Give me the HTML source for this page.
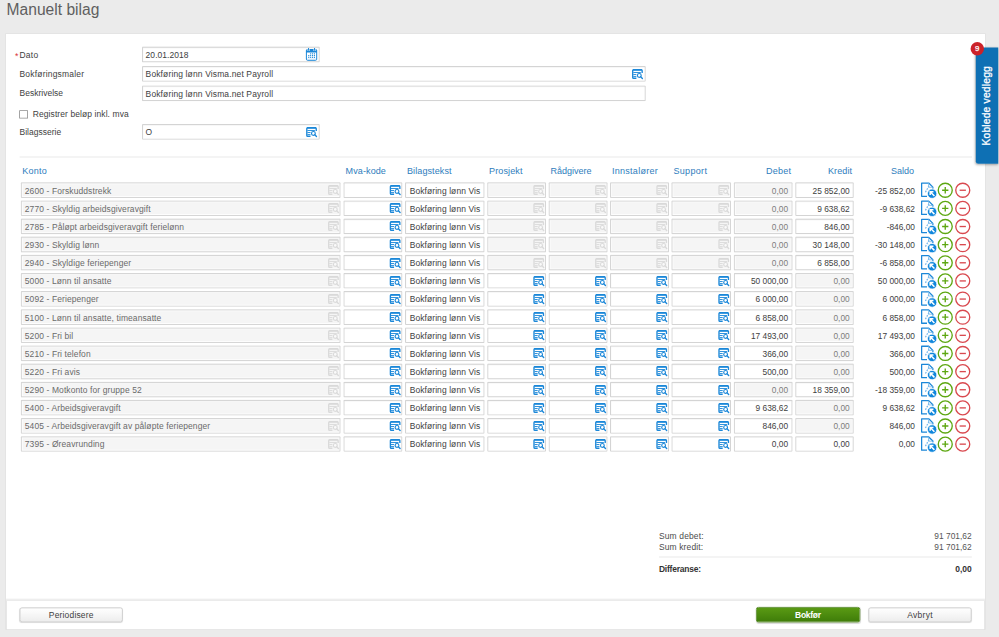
<!DOCTYPE html>
<html lang="no"><head><meta charset="utf-8"><title>Manuelt bilag</title>
<style>
html,body{margin:0;padding:0;background:#ebebeb;overflow:hidden}
body{width:999px;height:637px;position:relative;font-family:"Liberation Sans",sans-serif}
#s{position:absolute;left:0;top:0;width:4995px;height:3185px;transform:scale(0.2);transform-origin:0 0;background:#ebebeb;overflow:hidden}
#s>*{position:absolute;box-sizing:border-box}
#tx{position:absolute;left:0;top:0;font-family:"Liberation Sans",sans-serif}
#tx text{white-space:pre}
.panel{background:#fff;box-shadow:0 0 0 4px rgba(0,0,0,.035)}
.in{background:#fff;border-radius:5px;box-shadow:inset 0 0 0 5.4px #d4d4d4,inset 0 9.5px 4px rgba(0,0,0,.035)}
.dis{background:#f5f5f5;box-shadow:inset 0 0 0 5.4px #d6d6d6,inset 0 9.5px 4px rgba(0,0,0,.03),inset 0 0 0 10px rgba(255,255,255,.75)}
.cb{background:#fff;border:4.5px solid #8e8e8e;border-radius:2px}
.hr{background:#e3e3e3}
.foot{background:#fff;border:4px solid #e2e2e2;border-top:none}
.fsh{background:linear-gradient(rgba(0,0,0,0),rgba(0,0,0,.035) 45%,rgba(0,0,0,.14))}
.btn{border:4.25px solid #c4c4c4;border-radius:12px;background:linear-gradient(#ffffff,#ededed);box-shadow:0 4px 4px rgba(0,0,0,.15)}
.btn.g{border-color:#3f7a0a;background:linear-gradient(#5a9a14,#3f7d09)}
.tab{background:#0e70b4;border-radius:0 0 0 12px;box-shadow:-4px 4px 12px rgba(0,0,0,.3)}
.badge{background:#cc2229;border-radius:50%}
</style></head>
<body><div id="s">
<div class="panel" style="left:30px;top:170px;width:4895px;height:2975px;"></div>
<div class="in" style="left:710px;top:232.75px;width:889px;height:79.25px;"></div>
<div class="in" style="left:710px;top:329.75px;width:2519px;height:79.25px;"></div>
<div class="in" style="left:710px;top:426.5px;width:2519px;height:79.25px;"></div>
<div class="in" style="left:710px;top:620px;width:889px;height:79.25px;"></div>
<div class="cb" style="left:95.5px;top:550.5px;width:44px;height:42px;"></div>
<div class="hr" style="left:97.5px;top:782.5px;width:4762.5px;height:4.5px;"></div>
<div class="in dis" style="left:103.5px;top:911.25px;width:1599.5px;height:78.5px;"></div>
<div class="in" style="left:1717px;top:911.25px;width:294.5px;height:78.5px;"></div>
<div class="in" style="left:2025px;top:911.25px;width:398px;height:78.5px;"></div>
<div class="in dis" style="left:2435.5px;top:911.25px;width:294px;height:78.5px;"></div>
<div class="in dis" style="left:2742.75px;top:911.25px;width:295.5px;height:78.5px;"></div>
<div class="in dis" style="left:3050.25px;top:911.25px;width:294.25px;height:78.5px;"></div>
<div class="in dis" style="left:3357px;top:911.25px;width:297.5px;height:78.5px;"></div>
<div class="in dis" style="left:3668.75px;top:911.25px;width:293.75px;height:78.5px;"></div>
<div class="in" style="left:3976.25px;top:911.25px;width:292.5px;height:78.5px;"></div>
<div class="in dis" style="left:103.5px;top:1001.93px;width:1599.5px;height:78.5px;"></div>
<div class="in" style="left:1717px;top:1001.93px;width:294.5px;height:78.5px;"></div>
<div class="in" style="left:2025px;top:1001.93px;width:398px;height:78.5px;"></div>
<div class="in dis" style="left:2435.5px;top:1001.93px;width:294px;height:78.5px;"></div>
<div class="in dis" style="left:2742.75px;top:1001.93px;width:295.5px;height:78.5px;"></div>
<div class="in dis" style="left:3050.25px;top:1001.93px;width:294.25px;height:78.5px;"></div>
<div class="in dis" style="left:3357px;top:1001.93px;width:297.5px;height:78.5px;"></div>
<div class="in dis" style="left:3668.75px;top:1001.93px;width:293.75px;height:78.5px;"></div>
<div class="in" style="left:3976.25px;top:1001.93px;width:292.5px;height:78.5px;"></div>
<div class="in dis" style="left:103.5px;top:1092.61px;width:1599.5px;height:78.5px;"></div>
<div class="in" style="left:1717px;top:1092.61px;width:294.5px;height:78.5px;"></div>
<div class="in" style="left:2025px;top:1092.61px;width:398px;height:78.5px;"></div>
<div class="in dis" style="left:2435.5px;top:1092.61px;width:294px;height:78.5px;"></div>
<div class="in dis" style="left:2742.75px;top:1092.61px;width:295.5px;height:78.5px;"></div>
<div class="in dis" style="left:3050.25px;top:1092.61px;width:294.25px;height:78.5px;"></div>
<div class="in dis" style="left:3357px;top:1092.61px;width:297.5px;height:78.5px;"></div>
<div class="in dis" style="left:3668.75px;top:1092.61px;width:293.75px;height:78.5px;"></div>
<div class="in" style="left:3976.25px;top:1092.61px;width:292.5px;height:78.5px;"></div>
<div class="in dis" style="left:103.5px;top:1183.29px;width:1599.5px;height:78.5px;"></div>
<div class="in" style="left:1717px;top:1183.29px;width:294.5px;height:78.5px;"></div>
<div class="in" style="left:2025px;top:1183.29px;width:398px;height:78.5px;"></div>
<div class="in dis" style="left:2435.5px;top:1183.29px;width:294px;height:78.5px;"></div>
<div class="in dis" style="left:2742.75px;top:1183.29px;width:295.5px;height:78.5px;"></div>
<div class="in dis" style="left:3050.25px;top:1183.29px;width:294.25px;height:78.5px;"></div>
<div class="in dis" style="left:3357px;top:1183.29px;width:297.5px;height:78.5px;"></div>
<div class="in dis" style="left:3668.75px;top:1183.29px;width:293.75px;height:78.5px;"></div>
<div class="in" style="left:3976.25px;top:1183.29px;width:292.5px;height:78.5px;"></div>
<div class="in dis" style="left:103.5px;top:1273.97px;width:1599.5px;height:78.5px;"></div>
<div class="in" style="left:1717px;top:1273.97px;width:294.5px;height:78.5px;"></div>
<div class="in" style="left:2025px;top:1273.97px;width:398px;height:78.5px;"></div>
<div class="in dis" style="left:2435.5px;top:1273.97px;width:294px;height:78.5px;"></div>
<div class="in dis" style="left:2742.75px;top:1273.97px;width:295.5px;height:78.5px;"></div>
<div class="in dis" style="left:3050.25px;top:1273.97px;width:294.25px;height:78.5px;"></div>
<div class="in dis" style="left:3357px;top:1273.97px;width:297.5px;height:78.5px;"></div>
<div class="in dis" style="left:3668.75px;top:1273.97px;width:293.75px;height:78.5px;"></div>
<div class="in" style="left:3976.25px;top:1273.97px;width:292.5px;height:78.5px;"></div>
<div class="in dis" style="left:103.5px;top:1364.65px;width:1599.5px;height:78.5px;"></div>
<div class="in" style="left:1717px;top:1364.65px;width:294.5px;height:78.5px;"></div>
<div class="in" style="left:2025px;top:1364.65px;width:398px;height:78.5px;"></div>
<div class="in" style="left:2435.5px;top:1364.65px;width:294px;height:78.5px;"></div>
<div class="in" style="left:2742.75px;top:1364.65px;width:295.5px;height:78.5px;"></div>
<div class="in" style="left:3050.25px;top:1364.65px;width:294.25px;height:78.5px;"></div>
<div class="in" style="left:3357px;top:1364.65px;width:297.5px;height:78.5px;"></div>
<div class="in" style="left:3668.75px;top:1364.65px;width:293.75px;height:78.5px;"></div>
<div class="in dis" style="left:3976.25px;top:1364.65px;width:292.5px;height:78.5px;"></div>
<div class="in dis" style="left:103.5px;top:1455.33px;width:1599.5px;height:78.5px;"></div>
<div class="in" style="left:1717px;top:1455.33px;width:294.5px;height:78.5px;"></div>
<div class="in" style="left:2025px;top:1455.33px;width:398px;height:78.5px;"></div>
<div class="in" style="left:2435.5px;top:1455.33px;width:294px;height:78.5px;"></div>
<div class="in" style="left:2742.75px;top:1455.33px;width:295.5px;height:78.5px;"></div>
<div class="in" style="left:3050.25px;top:1455.33px;width:294.25px;height:78.5px;"></div>
<div class="in" style="left:3357px;top:1455.33px;width:297.5px;height:78.5px;"></div>
<div class="in" style="left:3668.75px;top:1455.33px;width:293.75px;height:78.5px;"></div>
<div class="in dis" style="left:3976.25px;top:1455.33px;width:292.5px;height:78.5px;"></div>
<div class="in dis" style="left:103.5px;top:1546.01px;width:1599.5px;height:78.5px;"></div>
<div class="in" style="left:1717px;top:1546.01px;width:294.5px;height:78.5px;"></div>
<div class="in" style="left:2025px;top:1546.01px;width:398px;height:78.5px;"></div>
<div class="in" style="left:2435.5px;top:1546.01px;width:294px;height:78.5px;"></div>
<div class="in" style="left:2742.75px;top:1546.01px;width:295.5px;height:78.5px;"></div>
<div class="in" style="left:3050.25px;top:1546.01px;width:294.25px;height:78.5px;"></div>
<div class="in" style="left:3357px;top:1546.01px;width:297.5px;height:78.5px;"></div>
<div class="in" style="left:3668.75px;top:1546.01px;width:293.75px;height:78.5px;"></div>
<div class="in dis" style="left:3976.25px;top:1546.01px;width:292.5px;height:78.5px;"></div>
<div class="in dis" style="left:103.5px;top:1636.69px;width:1599.5px;height:78.5px;"></div>
<div class="in" style="left:1717px;top:1636.69px;width:294.5px;height:78.5px;"></div>
<div class="in" style="left:2025px;top:1636.69px;width:398px;height:78.5px;"></div>
<div class="in" style="left:2435.5px;top:1636.69px;width:294px;height:78.5px;"></div>
<div class="in" style="left:2742.75px;top:1636.69px;width:295.5px;height:78.5px;"></div>
<div class="in" style="left:3050.25px;top:1636.69px;width:294.25px;height:78.5px;"></div>
<div class="in" style="left:3357px;top:1636.69px;width:297.5px;height:78.5px;"></div>
<div class="in" style="left:3668.75px;top:1636.69px;width:293.75px;height:78.5px;"></div>
<div class="in dis" style="left:3976.25px;top:1636.69px;width:292.5px;height:78.5px;"></div>
<div class="in dis" style="left:103.5px;top:1727.37px;width:1599.5px;height:78.5px;"></div>
<div class="in" style="left:1717px;top:1727.37px;width:294.5px;height:78.5px;"></div>
<div class="in" style="left:2025px;top:1727.37px;width:398px;height:78.5px;"></div>
<div class="in" style="left:2435.5px;top:1727.37px;width:294px;height:78.5px;"></div>
<div class="in" style="left:2742.75px;top:1727.37px;width:295.5px;height:78.5px;"></div>
<div class="in" style="left:3050.25px;top:1727.37px;width:294.25px;height:78.5px;"></div>
<div class="in" style="left:3357px;top:1727.37px;width:297.5px;height:78.5px;"></div>
<div class="in" style="left:3668.75px;top:1727.37px;width:293.75px;height:78.5px;"></div>
<div class="in dis" style="left:3976.25px;top:1727.37px;width:292.5px;height:78.5px;"></div>
<div class="in dis" style="left:103.5px;top:1818.05px;width:1599.5px;height:78.5px;"></div>
<div class="in" style="left:1717px;top:1818.05px;width:294.5px;height:78.5px;"></div>
<div class="in" style="left:2025px;top:1818.05px;width:398px;height:78.5px;"></div>
<div class="in" style="left:2435.5px;top:1818.05px;width:294px;height:78.5px;"></div>
<div class="in" style="left:2742.75px;top:1818.05px;width:295.5px;height:78.5px;"></div>
<div class="in" style="left:3050.25px;top:1818.05px;width:294.25px;height:78.5px;"></div>
<div class="in" style="left:3357px;top:1818.05px;width:297.5px;height:78.5px;"></div>
<div class="in" style="left:3668.75px;top:1818.05px;width:293.75px;height:78.5px;"></div>
<div class="in dis" style="left:3976.25px;top:1818.05px;width:292.5px;height:78.5px;"></div>
<div class="in dis" style="left:103.5px;top:1908.73px;width:1599.5px;height:78.5px;"></div>
<div class="in" style="left:1717px;top:1908.73px;width:294.5px;height:78.5px;"></div>
<div class="in" style="left:2025px;top:1908.73px;width:398px;height:78.5px;"></div>
<div class="in" style="left:2435.5px;top:1908.73px;width:294px;height:78.5px;"></div>
<div class="in" style="left:2742.75px;top:1908.73px;width:295.5px;height:78.5px;"></div>
<div class="in" style="left:3050.25px;top:1908.73px;width:294.25px;height:78.5px;"></div>
<div class="in" style="left:3357px;top:1908.73px;width:297.5px;height:78.5px;"></div>
<div class="in dis" style="left:3668.75px;top:1908.73px;width:293.75px;height:78.5px;"></div>
<div class="in" style="left:3976.25px;top:1908.73px;width:292.5px;height:78.5px;"></div>
<div class="in dis" style="left:103.5px;top:1999.41px;width:1599.5px;height:78.5px;"></div>
<div class="in" style="left:1717px;top:1999.41px;width:294.5px;height:78.5px;"></div>
<div class="in" style="left:2025px;top:1999.41px;width:398px;height:78.5px;"></div>
<div class="in" style="left:2435.5px;top:1999.41px;width:294px;height:78.5px;"></div>
<div class="in" style="left:2742.75px;top:1999.41px;width:295.5px;height:78.5px;"></div>
<div class="in" style="left:3050.25px;top:1999.41px;width:294.25px;height:78.5px;"></div>
<div class="in" style="left:3357px;top:1999.41px;width:297.5px;height:78.5px;"></div>
<div class="in" style="left:3668.75px;top:1999.41px;width:293.75px;height:78.5px;"></div>
<div class="in dis" style="left:3976.25px;top:1999.41px;width:292.5px;height:78.5px;"></div>
<div class="in dis" style="left:103.5px;top:2090.09px;width:1599.5px;height:78.5px;"></div>
<div class="in" style="left:1717px;top:2090.09px;width:294.5px;height:78.5px;"></div>
<div class="in" style="left:2025px;top:2090.09px;width:398px;height:78.5px;"></div>
<div class="in" style="left:2435.5px;top:2090.09px;width:294px;height:78.5px;"></div>
<div class="in" style="left:2742.75px;top:2090.09px;width:295.5px;height:78.5px;"></div>
<div class="in" style="left:3050.25px;top:2090.09px;width:294.25px;height:78.5px;"></div>
<div class="in" style="left:3357px;top:2090.09px;width:297.5px;height:78.5px;"></div>
<div class="in" style="left:3668.75px;top:2090.09px;width:293.75px;height:78.5px;"></div>
<div class="in dis" style="left:3976.25px;top:2090.09px;width:292.5px;height:78.5px;"></div>
<div class="in dis" style="left:103.5px;top:2180.77px;width:1599.5px;height:78.5px;"></div>
<div class="in" style="left:1717px;top:2180.77px;width:294.5px;height:78.5px;"></div>
<div class="in" style="left:2025px;top:2180.77px;width:398px;height:78.5px;"></div>
<div class="in" style="left:2435.5px;top:2180.77px;width:294px;height:78.5px;"></div>
<div class="in" style="left:2742.75px;top:2180.77px;width:295.5px;height:78.5px;"></div>
<div class="in" style="left:3050.25px;top:2180.77px;width:294.25px;height:78.5px;"></div>
<div class="in" style="left:3357px;top:2180.77px;width:297.5px;height:78.5px;"></div>
<div class="in" style="left:3668.75px;top:2180.77px;width:293.75px;height:78.5px;"></div>
<div class="in" style="left:3976.25px;top:2180.77px;width:292.5px;height:78.5px;"></div>
<div class="hr" style="left:3294.5px;top:2782.5px;width:1564px;height:4.5px;"></div>
<div class="fsh" style="left:30px;top:2987px;width:4895px;height:17px;"></div>
<div class="foot" style="left:30px;top:3004px;width:4895px;height:146px;"></div>
<div class="btn" style="left:97.5px;top:3036.5px;width:516.5px;height:74.5px;"></div>
<div class="btn g" style="left:3780px;top:3035px;width:521px;height:76.5px;"></div>
<div class="btn" style="left:4341.5px;top:3036.5px;width:516.5px;height:74.5px;"></div>
<div class="tab" style="left:4878.5px;top:238px;width:112.5px;height:580.5px;"></div>
<div class="badge" style="left:4853px;top:209.5px;width:67px;height:67px;"></div>
</div>
<svg id="tx" width="999" height="637" viewBox="0 0 999 637">
<text x="6.6" y="15.2" font-size="15.6" fill="#5f5f5f">Manuelt bilag</text>
<text x="15" y="59" font-size="8.8" fill="#d9333a">*</text>
<text x="19.5" y="57.7" font-size="8.48" fill="#3e3e3e" textLength="18.6">Dato</text>
<text x="19.5" y="77" font-size="8.48" fill="#3e3e3e" textLength="64.5">Bokføringsmaler</text>
<text x="19.5" y="96.4" font-size="8.48" fill="#3e3e3e" textLength="43.5">Beskrivelse</text>
<text x="19.5" y="135" font-size="8.48" fill="#3e3e3e" textLength="41.6">Bilagsserie</text>
<text x="145.6" y="57.8" font-size="8.48" fill="#3e3e3e" textLength="42.9">20.01.2018</text>
<text x="145.6" y="77.2" font-size="8.48" fill="#3e3e3e" textLength="127.5">Bokføring lønn Visma.net Payroll</text>
<text x="145.6" y="96.6" font-size="8.48" fill="#3e3e3e" textLength="127.5">Bokføring lønn Visma.net Payroll</text>
<text x="145.6" y="135.2" font-size="8.48" fill="#3e3e3e">O</text>
<g transform="translate(305.9 47.9)"><rect x=".5" y="1.6" width="10.3" height="10.8" rx="1.1" fill="#fff" stroke="#1b87d8" stroke-width="1"/><path d="M.3 4.5V2.8Q.3 1.3 1.8 1.3H9.5Q11 1.3 11 2.8V4.5Z" fill="#1b87d8"/><path d="M2.65 1V3.1M8.65 1V3.1" stroke="#fff" stroke-width="2"/><path d="M2.65 .5V2.5M8.65 .5V2.5" stroke="#1b87d8" stroke-width="1" stroke-linecap="round"/><path d="M1 11.2H10.3" stroke="#a9d2f1" stroke-width=".6"/><g fill="#1b87d8"><rect x="4.2" y="5.4" width="1.1" height="1.1"/><rect x="6.1" y="5.4" width="1.1" height="1.1"/><rect x="8" y="5.4" width="1.1" height="1.1"/><rect x="2.3" y="7.15" width="1.1" height="1.1"/><rect x="4.2" y="7.15" width="1.1" height="1.1"/><rect x="6.1" y="7.15" width="1.1" height="1.1"/><rect x="8" y="7.15" width="1.1" height="1.1"/><rect x="2.3" y="8.9" width="1.1" height="1.1"/><rect x="4.2" y="8.9" width="1.1" height="1.1"/><rect x="6.1" y="8.9" width="1.1" height="1.1"/><rect x="8" y="8.9" width="1.1" height="1.1"/></g></g>
<g transform="translate(632 69)"><g fill="none" stroke="#1b87d8" stroke-linejoin="round"><path d="M10.15 4V1.6Q10.15 .7 9.25 .7H1.6Q.7 .7 .7 1.6V8.4Q.7 9.25 1.6 9.25H4.4" stroke-width="1.35"/><path d="M1 .85H9.9" stroke-width="1.6"/><path d="M1.3 3.5H8.8M1.3 5.5H4.4M1.3 7.45H4.4" stroke-width=".9"/><circle cx="7.3" cy="6.4" r="1.9" stroke-width="1.15" fill="#fff"/><path d="M8.7 7.8L10.4 9.5" stroke-width="1.35" stroke-linecap="round"/></g></g>
<g transform="translate(306.1 127)"><g fill="none" stroke="#1b87d8" stroke-linejoin="round"><path d="M10.15 4V1.6Q10.15 .7 9.25 .7H1.6Q.7 .7 .7 1.6V8.4Q.7 9.25 1.6 9.25H4.4" stroke-width="1.35"/><path d="M1 .85H9.9" stroke-width="1.6"/><path d="M1.3 3.5H8.8M1.3 5.5H4.4M1.3 7.45H4.4" stroke-width=".9"/><circle cx="7.3" cy="6.4" r="1.9" stroke-width="1.15" fill="#fff"/><path d="M8.7 7.8L10.4 9.5" stroke-width="1.35" stroke-linecap="round"/></g></g>
<text x="32.8" y="117.1" font-size="8.48" fill="#3e3e3e" textLength="95.9">Registrer beløp inkl. mva</text>
<text x="22.2" y="174.2" font-size="9.04" fill="#2e7dbd" textLength="24.7">Konto</text>
<text x="345.6" y="174.2" font-size="9.04" fill="#2e7dbd" textLength="40.3">Mva-kode</text>
<text x="406.9" y="174.2" font-size="9.04" fill="#2e7dbd" textLength="44.7">Bilagstekst</text>
<text x="489" y="174.2" font-size="9.04" fill="#2e7dbd" textLength="33.5">Prosjekt</text>
<text x="550.6" y="174.2" font-size="9.04" fill="#2e7dbd" textLength="41">Rådgivere</text>
<text x="611.9" y="174.2" font-size="9.04" fill="#2e7dbd" textLength="45.9">Innstalører</text>
<text x="673.4" y="174.2" font-size="9.04" fill="#2e7dbd" textLength="33.5">Support</text>
<text x="766" y="174.2" font-size="9.04" fill="#2e7dbd" textLength="24.9">Debet</text>
<text x="827.9" y="174.2" font-size="9.04" fill="#2e7dbd" textLength="24.2">Kredit</text>
<text x="891.1" y="174.2" font-size="9.04" fill="#2e7dbd" textLength="22.9">Saldo</text>
<text x="24.8" y="193.55" font-size="8.48" fill="#6a6a6a" textLength="86.4">2600 - Forskuddstrekk</text>
<g transform="translate(328 185)"><g fill="none" stroke="#dadada" stroke-linejoin="round"><path d="M10.15 4V1.6Q10.15 .7 9.25 .7H1.6Q.7 .7 .7 1.6V8.4Q.7 9.25 1.6 9.25H4.4" stroke-width="1.35"/><path d="M1 .85H9.9" stroke-width="1.6"/><path d="M1.3 3.5H8.8M1.3 5.5H4.4M1.3 7.45H4.4" stroke-width=".9"/><circle cx="7.3" cy="6.4" r="1.9" stroke-width="1.15" fill="#fafafa"/><path d="M8.7 7.8L10.4 9.5" stroke-width="1.35" stroke-linecap="round"/></g></g>
<g transform="translate(389.7 185)"><g fill="none" stroke="#1b87d8" stroke-linejoin="round"><path d="M10.15 4V1.6Q10.15 .7 9.25 .7H1.6Q.7 .7 .7 1.6V8.4Q.7 9.25 1.6 9.25H4.4" stroke-width="1.35"/><path d="M1 .85H9.9" stroke-width="1.6"/><path d="M1.3 3.5H8.8M1.3 5.5H4.4M1.3 7.45H4.4" stroke-width=".9"/><circle cx="7.3" cy="6.4" r="1.9" stroke-width="1.15" fill="#fff"/><path d="M8.7 7.8L10.4 9.5" stroke-width="1.35" stroke-linecap="round"/></g></g>
<text x="409.7" y="193.55" font-size="8.48" fill="#3e3e3e" textLength="70.5">Bokføring lønn Vis</text>
<g transform="translate(533.3 185)"><g fill="none" stroke="#dadada" stroke-linejoin="round"><path d="M10.15 4V1.6Q10.15 .7 9.25 .7H1.6Q.7 .7 .7 1.6V8.4Q.7 9.25 1.6 9.25H4.4" stroke-width="1.35"/><path d="M1 .85H9.9" stroke-width="1.6"/><path d="M1.3 3.5H8.8M1.3 5.5H4.4M1.3 7.45H4.4" stroke-width=".9"/><circle cx="7.3" cy="6.4" r="1.9" stroke-width="1.15" fill="#fafafa"/><path d="M8.7 7.8L10.4 9.5" stroke-width="1.35" stroke-linecap="round"/></g></g>
<g transform="translate(595.05 185)"><g fill="none" stroke="#dadada" stroke-linejoin="round"><path d="M10.15 4V1.6Q10.15 .7 9.25 .7H1.6Q.7 .7 .7 1.6V8.4Q.7 9.25 1.6 9.25H4.4" stroke-width="1.35"/><path d="M1 .85H9.9" stroke-width="1.6"/><path d="M1.3 3.5H8.8M1.3 5.5H4.4M1.3 7.45H4.4" stroke-width=".9"/><circle cx="7.3" cy="6.4" r="1.9" stroke-width="1.15" fill="#fafafa"/><path d="M8.7 7.8L10.4 9.5" stroke-width="1.35" stroke-linecap="round"/></g></g>
<g transform="translate(656.3 185)"><g fill="none" stroke="#dadada" stroke-linejoin="round"><path d="M10.15 4V1.6Q10.15 .7 9.25 .7H1.6Q.7 .7 .7 1.6V8.4Q.7 9.25 1.6 9.25H4.4" stroke-width="1.35"/><path d="M1 .85H9.9" stroke-width="1.6"/><path d="M1.3 3.5H8.8M1.3 5.5H4.4M1.3 7.45H4.4" stroke-width=".9"/><circle cx="7.3" cy="6.4" r="1.9" stroke-width="1.15" fill="#fafafa"/><path d="M8.7 7.8L10.4 9.5" stroke-width="1.35" stroke-linecap="round"/></g></g>
<g transform="translate(718.3 185)"><g fill="none" stroke="#dadada" stroke-linejoin="round"><path d="M10.15 4V1.6Q10.15 .7 9.25 .7H1.6Q.7 .7 .7 1.6V8.4Q.7 9.25 1.6 9.25H4.4" stroke-width="1.35"/><path d="M1 .85H9.9" stroke-width="1.6"/><path d="M1.3 3.5H8.8M1.3 5.5H4.4M1.3 7.45H4.4" stroke-width=".9"/><circle cx="7.3" cy="6.4" r="1.9" stroke-width="1.15" fill="#fafafa"/><path d="M8.7 7.8L10.4 9.5" stroke-width="1.35" stroke-linecap="round"/></g></g>
<text x="771.83" y="193.55" font-size="8.36" fill="#7c7c7c">0,00</text>
<text x="812.56" y="193.55" font-size="8.36" fill="#3e3e3e">25 852,00</text>
<text x="875.02" y="193.55" font-size="8.36" fill="#3e3e3e">-25 852,00</text>
<g transform="translate(921 182.4) scale(0.79)"><path d="M7.6 17.6H.8V.8H9.8L15 6V8" fill="none" stroke="#1b87d8" stroke-width="1.6" stroke-linejoin="round"/><path d="M9.6 1V6.2H14.8" fill="none" stroke="#7fbdec" stroke-width="1.1"/><path d="M10.2 4.2L5.6 12.4" fill="none" stroke="#78b8eb" stroke-width="1.6" stroke-dasharray="2.2 1.4"/><circle cx="14.1" cy="14.3" r="5.9" fill="#0f86dc" stroke="#fff" stroke-width=".9"/><path d="M17 17.2L12.3 12.5M11.6 16V11.8H15.8" fill="none" stroke="#fff" stroke-width="1.9"/></g>
<g transform="translate(937.4 182.4) scale(0.785)"><circle cx="10" cy="10" r="8.9" fill="#fff" stroke="#5da711" stroke-width="1.7"/><path d="M6 10H14M10 6V14" stroke="#5da711" stroke-width="1.7"/></g>
<g transform="translate(954.9 182.4) scale(0.785)"><circle cx="10" cy="10" r="8.9" fill="#fff" stroke="#d9494f" stroke-width="1.7"/><path d="M6 10H14" stroke="#d9494f" stroke-width="1.7"/></g>
<text x="24.8" y="211.69" font-size="8.48" fill="#6a6a6a" textLength="125.81">2770 - Skyldig arbeidsgiveravgift</text>
<g transform="translate(328 203)"><g fill="none" stroke="#dadada" stroke-linejoin="round"><path d="M10.15 4V1.6Q10.15 .7 9.25 .7H1.6Q.7 .7 .7 1.6V8.4Q.7 9.25 1.6 9.25H4.4" stroke-width="1.35"/><path d="M1 .85H9.9" stroke-width="1.6"/><path d="M1.3 3.5H8.8M1.3 5.5H4.4M1.3 7.45H4.4" stroke-width=".9"/><circle cx="7.3" cy="6.4" r="1.9" stroke-width="1.15" fill="#fafafa"/><path d="M8.7 7.8L10.4 9.5" stroke-width="1.35" stroke-linecap="round"/></g></g>
<g transform="translate(389.7 203)"><g fill="none" stroke="#1b87d8" stroke-linejoin="round"><path d="M10.15 4V1.6Q10.15 .7 9.25 .7H1.6Q.7 .7 .7 1.6V8.4Q.7 9.25 1.6 9.25H4.4" stroke-width="1.35"/><path d="M1 .85H9.9" stroke-width="1.6"/><path d="M1.3 3.5H8.8M1.3 5.5H4.4M1.3 7.45H4.4" stroke-width=".9"/><circle cx="7.3" cy="6.4" r="1.9" stroke-width="1.15" fill="#fff"/><path d="M8.7 7.8L10.4 9.5" stroke-width="1.35" stroke-linecap="round"/></g></g>
<text x="409.7" y="211.69" font-size="8.48" fill="#3e3e3e" textLength="70.5">Bokføring lønn Vis</text>
<g transform="translate(533.3 203)"><g fill="none" stroke="#dadada" stroke-linejoin="round"><path d="M10.15 4V1.6Q10.15 .7 9.25 .7H1.6Q.7 .7 .7 1.6V8.4Q.7 9.25 1.6 9.25H4.4" stroke-width="1.35"/><path d="M1 .85H9.9" stroke-width="1.6"/><path d="M1.3 3.5H8.8M1.3 5.5H4.4M1.3 7.45H4.4" stroke-width=".9"/><circle cx="7.3" cy="6.4" r="1.9" stroke-width="1.15" fill="#fafafa"/><path d="M8.7 7.8L10.4 9.5" stroke-width="1.35" stroke-linecap="round"/></g></g>
<g transform="translate(595.05 203)"><g fill="none" stroke="#dadada" stroke-linejoin="round"><path d="M10.15 4V1.6Q10.15 .7 9.25 .7H1.6Q.7 .7 .7 1.6V8.4Q.7 9.25 1.6 9.25H4.4" stroke-width="1.35"/><path d="M1 .85H9.9" stroke-width="1.6"/><path d="M1.3 3.5H8.8M1.3 5.5H4.4M1.3 7.45H4.4" stroke-width=".9"/><circle cx="7.3" cy="6.4" r="1.9" stroke-width="1.15" fill="#fafafa"/><path d="M8.7 7.8L10.4 9.5" stroke-width="1.35" stroke-linecap="round"/></g></g>
<g transform="translate(656.3 203)"><g fill="none" stroke="#dadada" stroke-linejoin="round"><path d="M10.15 4V1.6Q10.15 .7 9.25 .7H1.6Q.7 .7 .7 1.6V8.4Q.7 9.25 1.6 9.25H4.4" stroke-width="1.35"/><path d="M1 .85H9.9" stroke-width="1.6"/><path d="M1.3 3.5H8.8M1.3 5.5H4.4M1.3 7.45H4.4" stroke-width=".9"/><circle cx="7.3" cy="6.4" r="1.9" stroke-width="1.15" fill="#fafafa"/><path d="M8.7 7.8L10.4 9.5" stroke-width="1.35" stroke-linecap="round"/></g></g>
<g transform="translate(718.3 203)"><g fill="none" stroke="#dadada" stroke-linejoin="round"><path d="M10.15 4V1.6Q10.15 .7 9.25 .7H1.6Q.7 .7 .7 1.6V8.4Q.7 9.25 1.6 9.25H4.4" stroke-width="1.35"/><path d="M1 .85H9.9" stroke-width="1.6"/><path d="M1.3 3.5H8.8M1.3 5.5H4.4M1.3 7.45H4.4" stroke-width=".9"/><circle cx="7.3" cy="6.4" r="1.9" stroke-width="1.15" fill="#fafafa"/><path d="M8.7 7.8L10.4 9.5" stroke-width="1.35" stroke-linecap="round"/></g></g>
<text x="771.83" y="211.69" font-size="8.36" fill="#7c7c7c">0,00</text>
<text x="817.21" y="211.69" font-size="8.36" fill="#3e3e3e">9 638,62</text>
<text x="879.67" y="211.69" font-size="8.36" fill="#3e3e3e">-9 638,62</text>
<g transform="translate(921 200.54) scale(0.79)"><path d="M7.6 17.6H.8V.8H9.8L15 6V8" fill="none" stroke="#1b87d8" stroke-width="1.6" stroke-linejoin="round"/><path d="M9.6 1V6.2H14.8" fill="none" stroke="#7fbdec" stroke-width="1.1"/><path d="M10.2 4.2L5.6 12.4" fill="none" stroke="#78b8eb" stroke-width="1.6" stroke-dasharray="2.2 1.4"/><circle cx="14.1" cy="14.3" r="5.9" fill="#0f86dc" stroke="#fff" stroke-width=".9"/><path d="M17 17.2L12.3 12.5M11.6 16V11.8H15.8" fill="none" stroke="#fff" stroke-width="1.9"/></g>
<g transform="translate(937.4 200.54) scale(0.785)"><circle cx="10" cy="10" r="8.9" fill="#fff" stroke="#5da711" stroke-width="1.7"/><path d="M6 10H14M10 6V14" stroke="#5da711" stroke-width="1.7"/></g>
<g transform="translate(954.9 200.54) scale(0.785)"><circle cx="10" cy="10" r="8.9" fill="#fff" stroke="#d9494f" stroke-width="1.7"/><path d="M6 10H14" stroke="#d9494f" stroke-width="1.7"/></g>
<text x="24.8" y="229.82" font-size="8.48" fill="#6a6a6a" textLength="159.24">2785 - Påløpt arbeidsgiveravgift ferielønn</text>
<g transform="translate(328 221)"><g fill="none" stroke="#dadada" stroke-linejoin="round"><path d="M10.15 4V1.6Q10.15 .7 9.25 .7H1.6Q.7 .7 .7 1.6V8.4Q.7 9.25 1.6 9.25H4.4" stroke-width="1.35"/><path d="M1 .85H9.9" stroke-width="1.6"/><path d="M1.3 3.5H8.8M1.3 5.5H4.4M1.3 7.45H4.4" stroke-width=".9"/><circle cx="7.3" cy="6.4" r="1.9" stroke-width="1.15" fill="#fafafa"/><path d="M8.7 7.8L10.4 9.5" stroke-width="1.35" stroke-linecap="round"/></g></g>
<g transform="translate(389.7 221)"><g fill="none" stroke="#1b87d8" stroke-linejoin="round"><path d="M10.15 4V1.6Q10.15 .7 9.25 .7H1.6Q.7 .7 .7 1.6V8.4Q.7 9.25 1.6 9.25H4.4" stroke-width="1.35"/><path d="M1 .85H9.9" stroke-width="1.6"/><path d="M1.3 3.5H8.8M1.3 5.5H4.4M1.3 7.45H4.4" stroke-width=".9"/><circle cx="7.3" cy="6.4" r="1.9" stroke-width="1.15" fill="#fff"/><path d="M8.7 7.8L10.4 9.5" stroke-width="1.35" stroke-linecap="round"/></g></g>
<text x="409.7" y="229.82" font-size="8.48" fill="#3e3e3e" textLength="70.5">Bokføring lønn Vis</text>
<g transform="translate(533.3 221)"><g fill="none" stroke="#dadada" stroke-linejoin="round"><path d="M10.15 4V1.6Q10.15 .7 9.25 .7H1.6Q.7 .7 .7 1.6V8.4Q.7 9.25 1.6 9.25H4.4" stroke-width="1.35"/><path d="M1 .85H9.9" stroke-width="1.6"/><path d="M1.3 3.5H8.8M1.3 5.5H4.4M1.3 7.45H4.4" stroke-width=".9"/><circle cx="7.3" cy="6.4" r="1.9" stroke-width="1.15" fill="#fafafa"/><path d="M8.7 7.8L10.4 9.5" stroke-width="1.35" stroke-linecap="round"/></g></g>
<g transform="translate(595.05 221)"><g fill="none" stroke="#dadada" stroke-linejoin="round"><path d="M10.15 4V1.6Q10.15 .7 9.25 .7H1.6Q.7 .7 .7 1.6V8.4Q.7 9.25 1.6 9.25H4.4" stroke-width="1.35"/><path d="M1 .85H9.9" stroke-width="1.6"/><path d="M1.3 3.5H8.8M1.3 5.5H4.4M1.3 7.45H4.4" stroke-width=".9"/><circle cx="7.3" cy="6.4" r="1.9" stroke-width="1.15" fill="#fafafa"/><path d="M8.7 7.8L10.4 9.5" stroke-width="1.35" stroke-linecap="round"/></g></g>
<g transform="translate(656.3 221)"><g fill="none" stroke="#dadada" stroke-linejoin="round"><path d="M10.15 4V1.6Q10.15 .7 9.25 .7H1.6Q.7 .7 .7 1.6V8.4Q.7 9.25 1.6 9.25H4.4" stroke-width="1.35"/><path d="M1 .85H9.9" stroke-width="1.6"/><path d="M1.3 3.5H8.8M1.3 5.5H4.4M1.3 7.45H4.4" stroke-width=".9"/><circle cx="7.3" cy="6.4" r="1.9" stroke-width="1.15" fill="#fafafa"/><path d="M8.7 7.8L10.4 9.5" stroke-width="1.35" stroke-linecap="round"/></g></g>
<g transform="translate(718.3 221)"><g fill="none" stroke="#dadada" stroke-linejoin="round"><path d="M10.15 4V1.6Q10.15 .7 9.25 .7H1.6Q.7 .7 .7 1.6V8.4Q.7 9.25 1.6 9.25H4.4" stroke-width="1.35"/><path d="M1 .85H9.9" stroke-width="1.6"/><path d="M1.3 3.5H8.8M1.3 5.5H4.4M1.3 7.45H4.4" stroke-width=".9"/><circle cx="7.3" cy="6.4" r="1.9" stroke-width="1.15" fill="#fafafa"/><path d="M8.7 7.8L10.4 9.5" stroke-width="1.35" stroke-linecap="round"/></g></g>
<text x="771.83" y="229.82" font-size="8.36" fill="#7c7c7c">0,00</text>
<text x="824.18" y="229.82" font-size="8.36" fill="#3e3e3e">846,00</text>
<text x="886.65" y="229.82" font-size="8.36" fill="#3e3e3e">-846,00</text>
<g transform="translate(921 218.67) scale(0.79)"><path d="M7.6 17.6H.8V.8H9.8L15 6V8" fill="none" stroke="#1b87d8" stroke-width="1.6" stroke-linejoin="round"/><path d="M9.6 1V6.2H14.8" fill="none" stroke="#7fbdec" stroke-width="1.1"/><path d="M10.2 4.2L5.6 12.4" fill="none" stroke="#78b8eb" stroke-width="1.6" stroke-dasharray="2.2 1.4"/><circle cx="14.1" cy="14.3" r="5.9" fill="#0f86dc" stroke="#fff" stroke-width=".9"/><path d="M17 17.2L12.3 12.5M11.6 16V11.8H15.8" fill="none" stroke="#fff" stroke-width="1.9"/></g>
<g transform="translate(937.4 218.67) scale(0.785)"><circle cx="10" cy="10" r="8.9" fill="#fff" stroke="#5da711" stroke-width="1.7"/><path d="M6 10H14M10 6V14" stroke="#5da711" stroke-width="1.7"/></g>
<g transform="translate(954.9 218.67) scale(0.785)"><circle cx="10" cy="10" r="8.9" fill="#fff" stroke="#d9494f" stroke-width="1.7"/><path d="M6 10H14" stroke="#d9494f" stroke-width="1.7"/></g>
<text x="24.8" y="247.96" font-size="8.48" fill="#6a6a6a" textLength="74.42">2930 - Skyldig lønn</text>
<g transform="translate(328 239)"><g fill="none" stroke="#dadada" stroke-linejoin="round"><path d="M10.15 4V1.6Q10.15 .7 9.25 .7H1.6Q.7 .7 .7 1.6V8.4Q.7 9.25 1.6 9.25H4.4" stroke-width="1.35"/><path d="M1 .85H9.9" stroke-width="1.6"/><path d="M1.3 3.5H8.8M1.3 5.5H4.4M1.3 7.45H4.4" stroke-width=".9"/><circle cx="7.3" cy="6.4" r="1.9" stroke-width="1.15" fill="#fafafa"/><path d="M8.7 7.8L10.4 9.5" stroke-width="1.35" stroke-linecap="round"/></g></g>
<g transform="translate(389.7 239)"><g fill="none" stroke="#1b87d8" stroke-linejoin="round"><path d="M10.15 4V1.6Q10.15 .7 9.25 .7H1.6Q.7 .7 .7 1.6V8.4Q.7 9.25 1.6 9.25H4.4" stroke-width="1.35"/><path d="M1 .85H9.9" stroke-width="1.6"/><path d="M1.3 3.5H8.8M1.3 5.5H4.4M1.3 7.45H4.4" stroke-width=".9"/><circle cx="7.3" cy="6.4" r="1.9" stroke-width="1.15" fill="#fff"/><path d="M8.7 7.8L10.4 9.5" stroke-width="1.35" stroke-linecap="round"/></g></g>
<text x="409.7" y="247.96" font-size="8.48" fill="#3e3e3e" textLength="70.5">Bokføring lønn Vis</text>
<g transform="translate(533.3 239)"><g fill="none" stroke="#dadada" stroke-linejoin="round"><path d="M10.15 4V1.6Q10.15 .7 9.25 .7H1.6Q.7 .7 .7 1.6V8.4Q.7 9.25 1.6 9.25H4.4" stroke-width="1.35"/><path d="M1 .85H9.9" stroke-width="1.6"/><path d="M1.3 3.5H8.8M1.3 5.5H4.4M1.3 7.45H4.4" stroke-width=".9"/><circle cx="7.3" cy="6.4" r="1.9" stroke-width="1.15" fill="#fafafa"/><path d="M8.7 7.8L10.4 9.5" stroke-width="1.35" stroke-linecap="round"/></g></g>
<g transform="translate(595.05 239)"><g fill="none" stroke="#dadada" stroke-linejoin="round"><path d="M10.15 4V1.6Q10.15 .7 9.25 .7H1.6Q.7 .7 .7 1.6V8.4Q.7 9.25 1.6 9.25H4.4" stroke-width="1.35"/><path d="M1 .85H9.9" stroke-width="1.6"/><path d="M1.3 3.5H8.8M1.3 5.5H4.4M1.3 7.45H4.4" stroke-width=".9"/><circle cx="7.3" cy="6.4" r="1.9" stroke-width="1.15" fill="#fafafa"/><path d="M8.7 7.8L10.4 9.5" stroke-width="1.35" stroke-linecap="round"/></g></g>
<g transform="translate(656.3 239)"><g fill="none" stroke="#dadada" stroke-linejoin="round"><path d="M10.15 4V1.6Q10.15 .7 9.25 .7H1.6Q.7 .7 .7 1.6V8.4Q.7 9.25 1.6 9.25H4.4" stroke-width="1.35"/><path d="M1 .85H9.9" stroke-width="1.6"/><path d="M1.3 3.5H8.8M1.3 5.5H4.4M1.3 7.45H4.4" stroke-width=".9"/><circle cx="7.3" cy="6.4" r="1.9" stroke-width="1.15" fill="#fafafa"/><path d="M8.7 7.8L10.4 9.5" stroke-width="1.35" stroke-linecap="round"/></g></g>
<g transform="translate(718.3 239)"><g fill="none" stroke="#dadada" stroke-linejoin="round"><path d="M10.15 4V1.6Q10.15 .7 9.25 .7H1.6Q.7 .7 .7 1.6V8.4Q.7 9.25 1.6 9.25H4.4" stroke-width="1.35"/><path d="M1 .85H9.9" stroke-width="1.6"/><path d="M1.3 3.5H8.8M1.3 5.5H4.4M1.3 7.45H4.4" stroke-width=".9"/><circle cx="7.3" cy="6.4" r="1.9" stroke-width="1.15" fill="#fafafa"/><path d="M8.7 7.8L10.4 9.5" stroke-width="1.35" stroke-linecap="round"/></g></g>
<text x="771.83" y="247.96" font-size="8.36" fill="#7c7c7c">0,00</text>
<text x="812.56" y="247.96" font-size="8.36" fill="#3e3e3e">30 148,00</text>
<text x="875.02" y="247.96" font-size="8.36" fill="#3e3e3e">-30 148,00</text>
<g transform="translate(921 236.81) scale(0.79)"><path d="M7.6 17.6H.8V.8H9.8L15 6V8" fill="none" stroke="#1b87d8" stroke-width="1.6" stroke-linejoin="round"/><path d="M9.6 1V6.2H14.8" fill="none" stroke="#7fbdec" stroke-width="1.1"/><path d="M10.2 4.2L5.6 12.4" fill="none" stroke="#78b8eb" stroke-width="1.6" stroke-dasharray="2.2 1.4"/><circle cx="14.1" cy="14.3" r="5.9" fill="#0f86dc" stroke="#fff" stroke-width=".9"/><path d="M17 17.2L12.3 12.5M11.6 16V11.8H15.8" fill="none" stroke="#fff" stroke-width="1.9"/></g>
<g transform="translate(937.4 236.81) scale(0.785)"><circle cx="10" cy="10" r="8.9" fill="#fff" stroke="#5da711" stroke-width="1.7"/><path d="M6 10H14M10 6V14" stroke="#5da711" stroke-width="1.7"/></g>
<g transform="translate(954.9 236.81) scale(0.785)"><circle cx="10" cy="10" r="8.9" fill="#fff" stroke="#d9494f" stroke-width="1.7"/><path d="M6 10H14" stroke="#d9494f" stroke-width="1.7"/></g>
<text x="24.8" y="266.09" font-size="8.48" fill="#6a6a6a" textLength="106.35">2940 - Skyldige feriepenger</text>
<g transform="translate(328 258)"><g fill="none" stroke="#dadada" stroke-linejoin="round"><path d="M10.15 4V1.6Q10.15 .7 9.25 .7H1.6Q.7 .7 .7 1.6V8.4Q.7 9.25 1.6 9.25H4.4" stroke-width="1.35"/><path d="M1 .85H9.9" stroke-width="1.6"/><path d="M1.3 3.5H8.8M1.3 5.5H4.4M1.3 7.45H4.4" stroke-width=".9"/><circle cx="7.3" cy="6.4" r="1.9" stroke-width="1.15" fill="#fafafa"/><path d="M8.7 7.8L10.4 9.5" stroke-width="1.35" stroke-linecap="round"/></g></g>
<g transform="translate(389.7 258)"><g fill="none" stroke="#1b87d8" stroke-linejoin="round"><path d="M10.15 4V1.6Q10.15 .7 9.25 .7H1.6Q.7 .7 .7 1.6V8.4Q.7 9.25 1.6 9.25H4.4" stroke-width="1.35"/><path d="M1 .85H9.9" stroke-width="1.6"/><path d="M1.3 3.5H8.8M1.3 5.5H4.4M1.3 7.45H4.4" stroke-width=".9"/><circle cx="7.3" cy="6.4" r="1.9" stroke-width="1.15" fill="#fff"/><path d="M8.7 7.8L10.4 9.5" stroke-width="1.35" stroke-linecap="round"/></g></g>
<text x="409.7" y="266.09" font-size="8.48" fill="#3e3e3e" textLength="70.5">Bokføring lønn Vis</text>
<g transform="translate(533.3 258)"><g fill="none" stroke="#dadada" stroke-linejoin="round"><path d="M10.15 4V1.6Q10.15 .7 9.25 .7H1.6Q.7 .7 .7 1.6V8.4Q.7 9.25 1.6 9.25H4.4" stroke-width="1.35"/><path d="M1 .85H9.9" stroke-width="1.6"/><path d="M1.3 3.5H8.8M1.3 5.5H4.4M1.3 7.45H4.4" stroke-width=".9"/><circle cx="7.3" cy="6.4" r="1.9" stroke-width="1.15" fill="#fafafa"/><path d="M8.7 7.8L10.4 9.5" stroke-width="1.35" stroke-linecap="round"/></g></g>
<g transform="translate(595.05 258)"><g fill="none" stroke="#dadada" stroke-linejoin="round"><path d="M10.15 4V1.6Q10.15 .7 9.25 .7H1.6Q.7 .7 .7 1.6V8.4Q.7 9.25 1.6 9.25H4.4" stroke-width="1.35"/><path d="M1 .85H9.9" stroke-width="1.6"/><path d="M1.3 3.5H8.8M1.3 5.5H4.4M1.3 7.45H4.4" stroke-width=".9"/><circle cx="7.3" cy="6.4" r="1.9" stroke-width="1.15" fill="#fafafa"/><path d="M8.7 7.8L10.4 9.5" stroke-width="1.35" stroke-linecap="round"/></g></g>
<g transform="translate(656.3 258)"><g fill="none" stroke="#dadada" stroke-linejoin="round"><path d="M10.15 4V1.6Q10.15 .7 9.25 .7H1.6Q.7 .7 .7 1.6V8.4Q.7 9.25 1.6 9.25H4.4" stroke-width="1.35"/><path d="M1 .85H9.9" stroke-width="1.6"/><path d="M1.3 3.5H8.8M1.3 5.5H4.4M1.3 7.45H4.4" stroke-width=".9"/><circle cx="7.3" cy="6.4" r="1.9" stroke-width="1.15" fill="#fafafa"/><path d="M8.7 7.8L10.4 9.5" stroke-width="1.35" stroke-linecap="round"/></g></g>
<g transform="translate(718.3 258)"><g fill="none" stroke="#dadada" stroke-linejoin="round"><path d="M10.15 4V1.6Q10.15 .7 9.25 .7H1.6Q.7 .7 .7 1.6V8.4Q.7 9.25 1.6 9.25H4.4" stroke-width="1.35"/><path d="M1 .85H9.9" stroke-width="1.6"/><path d="M1.3 3.5H8.8M1.3 5.5H4.4M1.3 7.45H4.4" stroke-width=".9"/><circle cx="7.3" cy="6.4" r="1.9" stroke-width="1.15" fill="#fafafa"/><path d="M8.7 7.8L10.4 9.5" stroke-width="1.35" stroke-linecap="round"/></g></g>
<text x="771.83" y="266.09" font-size="8.36" fill="#7c7c7c">0,00</text>
<text x="817.21" y="266.09" font-size="8.36" fill="#3e3e3e">6 858,00</text>
<text x="879.67" y="266.09" font-size="8.36" fill="#3e3e3e">-6 858,00</text>
<g transform="translate(921 254.94) scale(0.79)"><path d="M7.6 17.6H.8V.8H9.8L15 6V8" fill="none" stroke="#1b87d8" stroke-width="1.6" stroke-linejoin="round"/><path d="M9.6 1V6.2H14.8" fill="none" stroke="#7fbdec" stroke-width="1.1"/><path d="M10.2 4.2L5.6 12.4" fill="none" stroke="#78b8eb" stroke-width="1.6" stroke-dasharray="2.2 1.4"/><circle cx="14.1" cy="14.3" r="5.9" fill="#0f86dc" stroke="#fff" stroke-width=".9"/><path d="M17 17.2L12.3 12.5M11.6 16V11.8H15.8" fill="none" stroke="#fff" stroke-width="1.9"/></g>
<g transform="translate(937.4 254.94) scale(0.785)"><circle cx="10" cy="10" r="8.9" fill="#fff" stroke="#5da711" stroke-width="1.7"/><path d="M6 10H14M10 6V14" stroke="#5da711" stroke-width="1.7"/></g>
<g transform="translate(954.9 254.94) scale(0.785)"><circle cx="10" cy="10" r="8.9" fill="#fff" stroke="#d9494f" stroke-width="1.7"/><path d="M6 10H14" stroke="#d9494f" stroke-width="1.7"/></g>
<text x="24.8" y="284.23" font-size="8.48" fill="#6a6a6a" textLength="86.62">5000 - Lønn til ansatte</text>
<g transform="translate(328 276)"><g fill="none" stroke="#dadada" stroke-linejoin="round"><path d="M10.15 4V1.6Q10.15 .7 9.25 .7H1.6Q.7 .7 .7 1.6V8.4Q.7 9.25 1.6 9.25H4.4" stroke-width="1.35"/><path d="M1 .85H9.9" stroke-width="1.6"/><path d="M1.3 3.5H8.8M1.3 5.5H4.4M1.3 7.45H4.4" stroke-width=".9"/><circle cx="7.3" cy="6.4" r="1.9" stroke-width="1.15" fill="#fafafa"/><path d="M8.7 7.8L10.4 9.5" stroke-width="1.35" stroke-linecap="round"/></g></g>
<g transform="translate(389.7 276)"><g fill="none" stroke="#1b87d8" stroke-linejoin="round"><path d="M10.15 4V1.6Q10.15 .7 9.25 .7H1.6Q.7 .7 .7 1.6V8.4Q.7 9.25 1.6 9.25H4.4" stroke-width="1.35"/><path d="M1 .85H9.9" stroke-width="1.6"/><path d="M1.3 3.5H8.8M1.3 5.5H4.4M1.3 7.45H4.4" stroke-width=".9"/><circle cx="7.3" cy="6.4" r="1.9" stroke-width="1.15" fill="#fff"/><path d="M8.7 7.8L10.4 9.5" stroke-width="1.35" stroke-linecap="round"/></g></g>
<text x="409.7" y="284.23" font-size="8.48" fill="#3e3e3e" textLength="70.5">Bokføring lønn Vis</text>
<g transform="translate(533.3 276)"><g fill="none" stroke="#1b87d8" stroke-linejoin="round"><path d="M10.15 4V1.6Q10.15 .7 9.25 .7H1.6Q.7 .7 .7 1.6V8.4Q.7 9.25 1.6 9.25H4.4" stroke-width="1.35"/><path d="M1 .85H9.9" stroke-width="1.6"/><path d="M1.3 3.5H8.8M1.3 5.5H4.4M1.3 7.45H4.4" stroke-width=".9"/><circle cx="7.3" cy="6.4" r="1.9" stroke-width="1.15" fill="#fff"/><path d="M8.7 7.8L10.4 9.5" stroke-width="1.35" stroke-linecap="round"/></g></g>
<g transform="translate(595.05 276)"><g fill="none" stroke="#1b87d8" stroke-linejoin="round"><path d="M10.15 4V1.6Q10.15 .7 9.25 .7H1.6Q.7 .7 .7 1.6V8.4Q.7 9.25 1.6 9.25H4.4" stroke-width="1.35"/><path d="M1 .85H9.9" stroke-width="1.6"/><path d="M1.3 3.5H8.8M1.3 5.5H4.4M1.3 7.45H4.4" stroke-width=".9"/><circle cx="7.3" cy="6.4" r="1.9" stroke-width="1.15" fill="#fff"/><path d="M8.7 7.8L10.4 9.5" stroke-width="1.35" stroke-linecap="round"/></g></g>
<g transform="translate(656.3 276)"><g fill="none" stroke="#1b87d8" stroke-linejoin="round"><path d="M10.15 4V1.6Q10.15 .7 9.25 .7H1.6Q.7 .7 .7 1.6V8.4Q.7 9.25 1.6 9.25H4.4" stroke-width="1.35"/><path d="M1 .85H9.9" stroke-width="1.6"/><path d="M1.3 3.5H8.8M1.3 5.5H4.4M1.3 7.45H4.4" stroke-width=".9"/><circle cx="7.3" cy="6.4" r="1.9" stroke-width="1.15" fill="#fff"/><path d="M8.7 7.8L10.4 9.5" stroke-width="1.35" stroke-linecap="round"/></g></g>
<g transform="translate(718.3 276)"><g fill="none" stroke="#1b87d8" stroke-linejoin="round"><path d="M10.15 4V1.6Q10.15 .7 9.25 .7H1.6Q.7 .7 .7 1.6V8.4Q.7 9.25 1.6 9.25H4.4" stroke-width="1.35"/><path d="M1 .85H9.9" stroke-width="1.6"/><path d="M1.3 3.5H8.8M1.3 5.5H4.4M1.3 7.45H4.4" stroke-width=".9"/><circle cx="7.3" cy="6.4" r="1.9" stroke-width="1.15" fill="#fff"/><path d="M8.7 7.8L10.4 9.5" stroke-width="1.35" stroke-linecap="round"/></g></g>
<text x="750.91" y="284.23" font-size="8.36" fill="#3e3e3e">50 000,00</text>
<text x="833.48" y="284.23" font-size="8.36" fill="#7c7c7c">0,00</text>
<text x="877.81" y="284.23" font-size="8.36" fill="#3e3e3e">50 000,00</text>
<g transform="translate(921 273.08) scale(0.79)"><path d="M7.6 17.6H.8V.8H9.8L15 6V8" fill="none" stroke="#1b87d8" stroke-width="1.6" stroke-linejoin="round"/><path d="M9.6 1V6.2H14.8" fill="none" stroke="#7fbdec" stroke-width="1.1"/><path d="M10.2 4.2L5.6 12.4" fill="none" stroke="#78b8eb" stroke-width="1.6" stroke-dasharray="2.2 1.4"/><circle cx="14.1" cy="14.3" r="5.9" fill="#0f86dc" stroke="#fff" stroke-width=".9"/><path d="M17 17.2L12.3 12.5M11.6 16V11.8H15.8" fill="none" stroke="#fff" stroke-width="1.9"/></g>
<g transform="translate(937.4 273.08) scale(0.785)"><circle cx="10" cy="10" r="8.9" fill="#fff" stroke="#5da711" stroke-width="1.7"/><path d="M6 10H14M10 6V14" stroke="#5da711" stroke-width="1.7"/></g>
<g transform="translate(954.9 273.08) scale(0.785)"><circle cx="10" cy="10" r="8.9" fill="#fff" stroke="#d9494f" stroke-width="1.7"/><path d="M6 10H14" stroke="#d9494f" stroke-width="1.7"/></g>
<text x="24.8" y="302.37" font-size="8.48" fill="#6a6a6a" textLength="73.85">5092 - Feriepenger</text>
<g transform="translate(328 294)"><g fill="none" stroke="#dadada" stroke-linejoin="round"><path d="M10.15 4V1.6Q10.15 .7 9.25 .7H1.6Q.7 .7 .7 1.6V8.4Q.7 9.25 1.6 9.25H4.4" stroke-width="1.35"/><path d="M1 .85H9.9" stroke-width="1.6"/><path d="M1.3 3.5H8.8M1.3 5.5H4.4M1.3 7.45H4.4" stroke-width=".9"/><circle cx="7.3" cy="6.4" r="1.9" stroke-width="1.15" fill="#fafafa"/><path d="M8.7 7.8L10.4 9.5" stroke-width="1.35" stroke-linecap="round"/></g></g>
<g transform="translate(389.7 294)"><g fill="none" stroke="#1b87d8" stroke-linejoin="round"><path d="M10.15 4V1.6Q10.15 .7 9.25 .7H1.6Q.7 .7 .7 1.6V8.4Q.7 9.25 1.6 9.25H4.4" stroke-width="1.35"/><path d="M1 .85H9.9" stroke-width="1.6"/><path d="M1.3 3.5H8.8M1.3 5.5H4.4M1.3 7.45H4.4" stroke-width=".9"/><circle cx="7.3" cy="6.4" r="1.9" stroke-width="1.15" fill="#fff"/><path d="M8.7 7.8L10.4 9.5" stroke-width="1.35" stroke-linecap="round"/></g></g>
<text x="409.7" y="302.37" font-size="8.48" fill="#3e3e3e" textLength="70.5">Bokføring lønn Vis</text>
<g transform="translate(533.3 294)"><g fill="none" stroke="#1b87d8" stroke-linejoin="round"><path d="M10.15 4V1.6Q10.15 .7 9.25 .7H1.6Q.7 .7 .7 1.6V8.4Q.7 9.25 1.6 9.25H4.4" stroke-width="1.35"/><path d="M1 .85H9.9" stroke-width="1.6"/><path d="M1.3 3.5H8.8M1.3 5.5H4.4M1.3 7.45H4.4" stroke-width=".9"/><circle cx="7.3" cy="6.4" r="1.9" stroke-width="1.15" fill="#fff"/><path d="M8.7 7.8L10.4 9.5" stroke-width="1.35" stroke-linecap="round"/></g></g>
<g transform="translate(595.05 294)"><g fill="none" stroke="#1b87d8" stroke-linejoin="round"><path d="M10.15 4V1.6Q10.15 .7 9.25 .7H1.6Q.7 .7 .7 1.6V8.4Q.7 9.25 1.6 9.25H4.4" stroke-width="1.35"/><path d="M1 .85H9.9" stroke-width="1.6"/><path d="M1.3 3.5H8.8M1.3 5.5H4.4M1.3 7.45H4.4" stroke-width=".9"/><circle cx="7.3" cy="6.4" r="1.9" stroke-width="1.15" fill="#fff"/><path d="M8.7 7.8L10.4 9.5" stroke-width="1.35" stroke-linecap="round"/></g></g>
<g transform="translate(656.3 294)"><g fill="none" stroke="#1b87d8" stroke-linejoin="round"><path d="M10.15 4V1.6Q10.15 .7 9.25 .7H1.6Q.7 .7 .7 1.6V8.4Q.7 9.25 1.6 9.25H4.4" stroke-width="1.35"/><path d="M1 .85H9.9" stroke-width="1.6"/><path d="M1.3 3.5H8.8M1.3 5.5H4.4M1.3 7.45H4.4" stroke-width=".9"/><circle cx="7.3" cy="6.4" r="1.9" stroke-width="1.15" fill="#fff"/><path d="M8.7 7.8L10.4 9.5" stroke-width="1.35" stroke-linecap="round"/></g></g>
<g transform="translate(718.3 294)"><g fill="none" stroke="#1b87d8" stroke-linejoin="round"><path d="M10.15 4V1.6Q10.15 .7 9.25 .7H1.6Q.7 .7 .7 1.6V8.4Q.7 9.25 1.6 9.25H4.4" stroke-width="1.35"/><path d="M1 .85H9.9" stroke-width="1.6"/><path d="M1.3 3.5H8.8M1.3 5.5H4.4M1.3 7.45H4.4" stroke-width=".9"/><circle cx="7.3" cy="6.4" r="1.9" stroke-width="1.15" fill="#fff"/><path d="M8.7 7.8L10.4 9.5" stroke-width="1.35" stroke-linecap="round"/></g></g>
<text x="755.56" y="302.37" font-size="8.36" fill="#3e3e3e">6 000,00</text>
<text x="833.48" y="302.37" font-size="8.36" fill="#7c7c7c">0,00</text>
<text x="882.46" y="302.37" font-size="8.36" fill="#3e3e3e">6 000,00</text>
<g transform="translate(921 291.22) scale(0.79)"><path d="M7.6 17.6H.8V.8H9.8L15 6V8" fill="none" stroke="#1b87d8" stroke-width="1.6" stroke-linejoin="round"/><path d="M9.6 1V6.2H14.8" fill="none" stroke="#7fbdec" stroke-width="1.1"/><path d="M10.2 4.2L5.6 12.4" fill="none" stroke="#78b8eb" stroke-width="1.6" stroke-dasharray="2.2 1.4"/><circle cx="14.1" cy="14.3" r="5.9" fill="#0f86dc" stroke="#fff" stroke-width=".9"/><path d="M17 17.2L12.3 12.5M11.6 16V11.8H15.8" fill="none" stroke="#fff" stroke-width="1.9"/></g>
<g transform="translate(937.4 291.22) scale(0.785)"><circle cx="10" cy="10" r="8.9" fill="#fff" stroke="#5da711" stroke-width="1.7"/><path d="M6 10H14M10 6V14" stroke="#5da711" stroke-width="1.7"/></g>
<g transform="translate(954.9 291.22) scale(0.785)"><circle cx="10" cy="10" r="8.9" fill="#fff" stroke="#d9494f" stroke-width="1.7"/><path d="M6 10H14" stroke="#d9494f" stroke-width="1.7"/></g>
<text x="24.8" y="320.5" font-size="8.48" fill="#6a6a6a" textLength="136.49">5100 - Lønn til ansatte, timeansatte</text>
<g transform="translate(328 312)"><g fill="none" stroke="#dadada" stroke-linejoin="round"><path d="M10.15 4V1.6Q10.15 .7 9.25 .7H1.6Q.7 .7 .7 1.6V8.4Q.7 9.25 1.6 9.25H4.4" stroke-width="1.35"/><path d="M1 .85H9.9" stroke-width="1.6"/><path d="M1.3 3.5H8.8M1.3 5.5H4.4M1.3 7.45H4.4" stroke-width=".9"/><circle cx="7.3" cy="6.4" r="1.9" stroke-width="1.15" fill="#fafafa"/><path d="M8.7 7.8L10.4 9.5" stroke-width="1.35" stroke-linecap="round"/></g></g>
<g transform="translate(389.7 312)"><g fill="none" stroke="#1b87d8" stroke-linejoin="round"><path d="M10.15 4V1.6Q10.15 .7 9.25 .7H1.6Q.7 .7 .7 1.6V8.4Q.7 9.25 1.6 9.25H4.4" stroke-width="1.35"/><path d="M1 .85H9.9" stroke-width="1.6"/><path d="M1.3 3.5H8.8M1.3 5.5H4.4M1.3 7.45H4.4" stroke-width=".9"/><circle cx="7.3" cy="6.4" r="1.9" stroke-width="1.15" fill="#fff"/><path d="M8.7 7.8L10.4 9.5" stroke-width="1.35" stroke-linecap="round"/></g></g>
<text x="409.7" y="320.5" font-size="8.48" fill="#3e3e3e" textLength="70.5">Bokføring lønn Vis</text>
<g transform="translate(533.3 312)"><g fill="none" stroke="#1b87d8" stroke-linejoin="round"><path d="M10.15 4V1.6Q10.15 .7 9.25 .7H1.6Q.7 .7 .7 1.6V8.4Q.7 9.25 1.6 9.25H4.4" stroke-width="1.35"/><path d="M1 .85H9.9" stroke-width="1.6"/><path d="M1.3 3.5H8.8M1.3 5.5H4.4M1.3 7.45H4.4" stroke-width=".9"/><circle cx="7.3" cy="6.4" r="1.9" stroke-width="1.15" fill="#fff"/><path d="M8.7 7.8L10.4 9.5" stroke-width="1.35" stroke-linecap="round"/></g></g>
<g transform="translate(595.05 312)"><g fill="none" stroke="#1b87d8" stroke-linejoin="round"><path d="M10.15 4V1.6Q10.15 .7 9.25 .7H1.6Q.7 .7 .7 1.6V8.4Q.7 9.25 1.6 9.25H4.4" stroke-width="1.35"/><path d="M1 .85H9.9" stroke-width="1.6"/><path d="M1.3 3.5H8.8M1.3 5.5H4.4M1.3 7.45H4.4" stroke-width=".9"/><circle cx="7.3" cy="6.4" r="1.9" stroke-width="1.15" fill="#fff"/><path d="M8.7 7.8L10.4 9.5" stroke-width="1.35" stroke-linecap="round"/></g></g>
<g transform="translate(656.3 312)"><g fill="none" stroke="#1b87d8" stroke-linejoin="round"><path d="M10.15 4V1.6Q10.15 .7 9.25 .7H1.6Q.7 .7 .7 1.6V8.4Q.7 9.25 1.6 9.25H4.4" stroke-width="1.35"/><path d="M1 .85H9.9" stroke-width="1.6"/><path d="M1.3 3.5H8.8M1.3 5.5H4.4M1.3 7.45H4.4" stroke-width=".9"/><circle cx="7.3" cy="6.4" r="1.9" stroke-width="1.15" fill="#fff"/><path d="M8.7 7.8L10.4 9.5" stroke-width="1.35" stroke-linecap="round"/></g></g>
<g transform="translate(718.3 312)"><g fill="none" stroke="#1b87d8" stroke-linejoin="round"><path d="M10.15 4V1.6Q10.15 .7 9.25 .7H1.6Q.7 .7 .7 1.6V8.4Q.7 9.25 1.6 9.25H4.4" stroke-width="1.35"/><path d="M1 .85H9.9" stroke-width="1.6"/><path d="M1.3 3.5H8.8M1.3 5.5H4.4M1.3 7.45H4.4" stroke-width=".9"/><circle cx="7.3" cy="6.4" r="1.9" stroke-width="1.15" fill="#fff"/><path d="M8.7 7.8L10.4 9.5" stroke-width="1.35" stroke-linecap="round"/></g></g>
<text x="755.56" y="320.5" font-size="8.36" fill="#3e3e3e">6 858,00</text>
<text x="833.48" y="320.5" font-size="8.36" fill="#7c7c7c">0,00</text>
<text x="882.46" y="320.5" font-size="8.36" fill="#3e3e3e">6 858,00</text>
<g transform="translate(921 309.35) scale(0.79)"><path d="M7.6 17.6H.8V.8H9.8L15 6V8" fill="none" stroke="#1b87d8" stroke-width="1.6" stroke-linejoin="round"/><path d="M9.6 1V6.2H14.8" fill="none" stroke="#7fbdec" stroke-width="1.1"/><path d="M10.2 4.2L5.6 12.4" fill="none" stroke="#78b8eb" stroke-width="1.6" stroke-dasharray="2.2 1.4"/><circle cx="14.1" cy="14.3" r="5.9" fill="#0f86dc" stroke="#fff" stroke-width=".9"/><path d="M17 17.2L12.3 12.5M11.6 16V11.8H15.8" fill="none" stroke="#fff" stroke-width="1.9"/></g>
<g transform="translate(937.4 309.35) scale(0.785)"><circle cx="10" cy="10" r="8.9" fill="#fff" stroke="#5da711" stroke-width="1.7"/><path d="M6 10H14M10 6V14" stroke="#5da711" stroke-width="1.7"/></g>
<g transform="translate(954.9 309.35) scale(0.785)"><circle cx="10" cy="10" r="8.9" fill="#fff" stroke="#d9494f" stroke-width="1.7"/><path d="M6 10H14" stroke="#d9494f" stroke-width="1.7"/></g>
<text x="24.8" y="338.64" font-size="8.48" fill="#6a6a6a" textLength="48.45">5200 - Fri bil</text>
<g transform="translate(328 330)"><g fill="none" stroke="#dadada" stroke-linejoin="round"><path d="M10.15 4V1.6Q10.15 .7 9.25 .7H1.6Q.7 .7 .7 1.6V8.4Q.7 9.25 1.6 9.25H4.4" stroke-width="1.35"/><path d="M1 .85H9.9" stroke-width="1.6"/><path d="M1.3 3.5H8.8M1.3 5.5H4.4M1.3 7.45H4.4" stroke-width=".9"/><circle cx="7.3" cy="6.4" r="1.9" stroke-width="1.15" fill="#fafafa"/><path d="M8.7 7.8L10.4 9.5" stroke-width="1.35" stroke-linecap="round"/></g></g>
<g transform="translate(389.7 330)"><g fill="none" stroke="#1b87d8" stroke-linejoin="round"><path d="M10.15 4V1.6Q10.15 .7 9.25 .7H1.6Q.7 .7 .7 1.6V8.4Q.7 9.25 1.6 9.25H4.4" stroke-width="1.35"/><path d="M1 .85H9.9" stroke-width="1.6"/><path d="M1.3 3.5H8.8M1.3 5.5H4.4M1.3 7.45H4.4" stroke-width=".9"/><circle cx="7.3" cy="6.4" r="1.9" stroke-width="1.15" fill="#fff"/><path d="M8.7 7.8L10.4 9.5" stroke-width="1.35" stroke-linecap="round"/></g></g>
<text x="409.7" y="338.64" font-size="8.48" fill="#3e3e3e" textLength="70.5">Bokføring lønn Vis</text>
<g transform="translate(533.3 330)"><g fill="none" stroke="#1b87d8" stroke-linejoin="round"><path d="M10.15 4V1.6Q10.15 .7 9.25 .7H1.6Q.7 .7 .7 1.6V8.4Q.7 9.25 1.6 9.25H4.4" stroke-width="1.35"/><path d="M1 .85H9.9" stroke-width="1.6"/><path d="M1.3 3.5H8.8M1.3 5.5H4.4M1.3 7.45H4.4" stroke-width=".9"/><circle cx="7.3" cy="6.4" r="1.9" stroke-width="1.15" fill="#fff"/><path d="M8.7 7.8L10.4 9.5" stroke-width="1.35" stroke-linecap="round"/></g></g>
<g transform="translate(595.05 330)"><g fill="none" stroke="#1b87d8" stroke-linejoin="round"><path d="M10.15 4V1.6Q10.15 .7 9.25 .7H1.6Q.7 .7 .7 1.6V8.4Q.7 9.25 1.6 9.25H4.4" stroke-width="1.35"/><path d="M1 .85H9.9" stroke-width="1.6"/><path d="M1.3 3.5H8.8M1.3 5.5H4.4M1.3 7.45H4.4" stroke-width=".9"/><circle cx="7.3" cy="6.4" r="1.9" stroke-width="1.15" fill="#fff"/><path d="M8.7 7.8L10.4 9.5" stroke-width="1.35" stroke-linecap="round"/></g></g>
<g transform="translate(656.3 330)"><g fill="none" stroke="#1b87d8" stroke-linejoin="round"><path d="M10.15 4V1.6Q10.15 .7 9.25 .7H1.6Q.7 .7 .7 1.6V8.4Q.7 9.25 1.6 9.25H4.4" stroke-width="1.35"/><path d="M1 .85H9.9" stroke-width="1.6"/><path d="M1.3 3.5H8.8M1.3 5.5H4.4M1.3 7.45H4.4" stroke-width=".9"/><circle cx="7.3" cy="6.4" r="1.9" stroke-width="1.15" fill="#fff"/><path d="M8.7 7.8L10.4 9.5" stroke-width="1.35" stroke-linecap="round"/></g></g>
<g transform="translate(718.3 330)"><g fill="none" stroke="#1b87d8" stroke-linejoin="round"><path d="M10.15 4V1.6Q10.15 .7 9.25 .7H1.6Q.7 .7 .7 1.6V8.4Q.7 9.25 1.6 9.25H4.4" stroke-width="1.35"/><path d="M1 .85H9.9" stroke-width="1.6"/><path d="M1.3 3.5H8.8M1.3 5.5H4.4M1.3 7.45H4.4" stroke-width=".9"/><circle cx="7.3" cy="6.4" r="1.9" stroke-width="1.15" fill="#fff"/><path d="M8.7 7.8L10.4 9.5" stroke-width="1.35" stroke-linecap="round"/></g></g>
<text x="750.91" y="338.64" font-size="8.36" fill="#3e3e3e">17 493,00</text>
<text x="833.48" y="338.64" font-size="8.36" fill="#7c7c7c">0,00</text>
<text x="877.81" y="338.64" font-size="8.36" fill="#3e3e3e">17 493,00</text>
<g transform="translate(921 327.49) scale(0.79)"><path d="M7.6 17.6H.8V.8H9.8L15 6V8" fill="none" stroke="#1b87d8" stroke-width="1.6" stroke-linejoin="round"/><path d="M9.6 1V6.2H14.8" fill="none" stroke="#7fbdec" stroke-width="1.1"/><path d="M10.2 4.2L5.6 12.4" fill="none" stroke="#78b8eb" stroke-width="1.6" stroke-dasharray="2.2 1.4"/><circle cx="14.1" cy="14.3" r="5.9" fill="#0f86dc" stroke="#fff" stroke-width=".9"/><path d="M17 17.2L12.3 12.5M11.6 16V11.8H15.8" fill="none" stroke="#fff" stroke-width="1.9"/></g>
<g transform="translate(937.4 327.49) scale(0.785)"><circle cx="10" cy="10" r="8.9" fill="#fff" stroke="#5da711" stroke-width="1.7"/><path d="M6 10H14M10 6V14" stroke="#5da711" stroke-width="1.7"/></g>
<g transform="translate(954.9 327.49) scale(0.785)"><circle cx="10" cy="10" r="8.9" fill="#fff" stroke="#d9494f" stroke-width="1.7"/><path d="M6 10H14" stroke="#d9494f" stroke-width="1.7"/></g>
<text x="24.8" y="356.77" font-size="8.48" fill="#6a6a6a" textLength="65.83">5210 - Fri telefon</text>
<g transform="translate(328 348)"><g fill="none" stroke="#dadada" stroke-linejoin="round"><path d="M10.15 4V1.6Q10.15 .7 9.25 .7H1.6Q.7 .7 .7 1.6V8.4Q.7 9.25 1.6 9.25H4.4" stroke-width="1.35"/><path d="M1 .85H9.9" stroke-width="1.6"/><path d="M1.3 3.5H8.8M1.3 5.5H4.4M1.3 7.45H4.4" stroke-width=".9"/><circle cx="7.3" cy="6.4" r="1.9" stroke-width="1.15" fill="#fafafa"/><path d="M8.7 7.8L10.4 9.5" stroke-width="1.35" stroke-linecap="round"/></g></g>
<g transform="translate(389.7 348)"><g fill="none" stroke="#1b87d8" stroke-linejoin="round"><path d="M10.15 4V1.6Q10.15 .7 9.25 .7H1.6Q.7 .7 .7 1.6V8.4Q.7 9.25 1.6 9.25H4.4" stroke-width="1.35"/><path d="M1 .85H9.9" stroke-width="1.6"/><path d="M1.3 3.5H8.8M1.3 5.5H4.4M1.3 7.45H4.4" stroke-width=".9"/><circle cx="7.3" cy="6.4" r="1.9" stroke-width="1.15" fill="#fff"/><path d="M8.7 7.8L10.4 9.5" stroke-width="1.35" stroke-linecap="round"/></g></g>
<text x="409.7" y="356.77" font-size="8.48" fill="#3e3e3e" textLength="70.5">Bokføring lønn Vis</text>
<g transform="translate(533.3 348)"><g fill="none" stroke="#1b87d8" stroke-linejoin="round"><path d="M10.15 4V1.6Q10.15 .7 9.25 .7H1.6Q.7 .7 .7 1.6V8.4Q.7 9.25 1.6 9.25H4.4" stroke-width="1.35"/><path d="M1 .85H9.9" stroke-width="1.6"/><path d="M1.3 3.5H8.8M1.3 5.5H4.4M1.3 7.45H4.4" stroke-width=".9"/><circle cx="7.3" cy="6.4" r="1.9" stroke-width="1.15" fill="#fff"/><path d="M8.7 7.8L10.4 9.5" stroke-width="1.35" stroke-linecap="round"/></g></g>
<g transform="translate(595.05 348)"><g fill="none" stroke="#1b87d8" stroke-linejoin="round"><path d="M10.15 4V1.6Q10.15 .7 9.25 .7H1.6Q.7 .7 .7 1.6V8.4Q.7 9.25 1.6 9.25H4.4" stroke-width="1.35"/><path d="M1 .85H9.9" stroke-width="1.6"/><path d="M1.3 3.5H8.8M1.3 5.5H4.4M1.3 7.45H4.4" stroke-width=".9"/><circle cx="7.3" cy="6.4" r="1.9" stroke-width="1.15" fill="#fff"/><path d="M8.7 7.8L10.4 9.5" stroke-width="1.35" stroke-linecap="round"/></g></g>
<g transform="translate(656.3 348)"><g fill="none" stroke="#1b87d8" stroke-linejoin="round"><path d="M10.15 4V1.6Q10.15 .7 9.25 .7H1.6Q.7 .7 .7 1.6V8.4Q.7 9.25 1.6 9.25H4.4" stroke-width="1.35"/><path d="M1 .85H9.9" stroke-width="1.6"/><path d="M1.3 3.5H8.8M1.3 5.5H4.4M1.3 7.45H4.4" stroke-width=".9"/><circle cx="7.3" cy="6.4" r="1.9" stroke-width="1.15" fill="#fff"/><path d="M8.7 7.8L10.4 9.5" stroke-width="1.35" stroke-linecap="round"/></g></g>
<g transform="translate(718.3 348)"><g fill="none" stroke="#1b87d8" stroke-linejoin="round"><path d="M10.15 4V1.6Q10.15 .7 9.25 .7H1.6Q.7 .7 .7 1.6V8.4Q.7 9.25 1.6 9.25H4.4" stroke-width="1.35"/><path d="M1 .85H9.9" stroke-width="1.6"/><path d="M1.3 3.5H8.8M1.3 5.5H4.4M1.3 7.45H4.4" stroke-width=".9"/><circle cx="7.3" cy="6.4" r="1.9" stroke-width="1.15" fill="#fff"/><path d="M8.7 7.8L10.4 9.5" stroke-width="1.35" stroke-linecap="round"/></g></g>
<text x="762.53" y="356.77" font-size="8.36" fill="#3e3e3e">366,00</text>
<text x="833.48" y="356.77" font-size="8.36" fill="#7c7c7c">0,00</text>
<text x="889.43" y="356.77" font-size="8.36" fill="#3e3e3e">366,00</text>
<g transform="translate(921 345.62) scale(0.79)"><path d="M7.6 17.6H.8V.8H9.8L15 6V8" fill="none" stroke="#1b87d8" stroke-width="1.6" stroke-linejoin="round"/><path d="M9.6 1V6.2H14.8" fill="none" stroke="#7fbdec" stroke-width="1.1"/><path d="M10.2 4.2L5.6 12.4" fill="none" stroke="#78b8eb" stroke-width="1.6" stroke-dasharray="2.2 1.4"/><circle cx="14.1" cy="14.3" r="5.9" fill="#0f86dc" stroke="#fff" stroke-width=".9"/><path d="M17 17.2L12.3 12.5M11.6 16V11.8H15.8" fill="none" stroke="#fff" stroke-width="1.9"/></g>
<g transform="translate(937.4 345.62) scale(0.785)"><circle cx="10" cy="10" r="8.9" fill="#fff" stroke="#5da711" stroke-width="1.7"/><path d="M6 10H14M10 6V14" stroke="#5da711" stroke-width="1.7"/></g>
<g transform="translate(954.9 345.62) scale(0.785)"><circle cx="10" cy="10" r="8.9" fill="#fff" stroke="#d9494f" stroke-width="1.7"/><path d="M6 10H14" stroke="#d9494f" stroke-width="1.7"/></g>
<text x="24.8" y="374.91" font-size="8.48" fill="#6a6a6a" textLength="55.15">5220 - Fri avis</text>
<g transform="translate(328 366)"><g fill="none" stroke="#dadada" stroke-linejoin="round"><path d="M10.15 4V1.6Q10.15 .7 9.25 .7H1.6Q.7 .7 .7 1.6V8.4Q.7 9.25 1.6 9.25H4.4" stroke-width="1.35"/><path d="M1 .85H9.9" stroke-width="1.6"/><path d="M1.3 3.5H8.8M1.3 5.5H4.4M1.3 7.45H4.4" stroke-width=".9"/><circle cx="7.3" cy="6.4" r="1.9" stroke-width="1.15" fill="#fafafa"/><path d="M8.7 7.8L10.4 9.5" stroke-width="1.35" stroke-linecap="round"/></g></g>
<g transform="translate(389.7 366)"><g fill="none" stroke="#1b87d8" stroke-linejoin="round"><path d="M10.15 4V1.6Q10.15 .7 9.25 .7H1.6Q.7 .7 .7 1.6V8.4Q.7 9.25 1.6 9.25H4.4" stroke-width="1.35"/><path d="M1 .85H9.9" stroke-width="1.6"/><path d="M1.3 3.5H8.8M1.3 5.5H4.4M1.3 7.45H4.4" stroke-width=".9"/><circle cx="7.3" cy="6.4" r="1.9" stroke-width="1.15" fill="#fff"/><path d="M8.7 7.8L10.4 9.5" stroke-width="1.35" stroke-linecap="round"/></g></g>
<text x="409.7" y="374.91" font-size="8.48" fill="#3e3e3e" textLength="70.5">Bokføring lønn Vis</text>
<g transform="translate(533.3 366)"><g fill="none" stroke="#1b87d8" stroke-linejoin="round"><path d="M10.15 4V1.6Q10.15 .7 9.25 .7H1.6Q.7 .7 .7 1.6V8.4Q.7 9.25 1.6 9.25H4.4" stroke-width="1.35"/><path d="M1 .85H9.9" stroke-width="1.6"/><path d="M1.3 3.5H8.8M1.3 5.5H4.4M1.3 7.45H4.4" stroke-width=".9"/><circle cx="7.3" cy="6.4" r="1.9" stroke-width="1.15" fill="#fff"/><path d="M8.7 7.8L10.4 9.5" stroke-width="1.35" stroke-linecap="round"/></g></g>
<g transform="translate(595.05 366)"><g fill="none" stroke="#1b87d8" stroke-linejoin="round"><path d="M10.15 4V1.6Q10.15 .7 9.25 .7H1.6Q.7 .7 .7 1.6V8.4Q.7 9.25 1.6 9.25H4.4" stroke-width="1.35"/><path d="M1 .85H9.9" stroke-width="1.6"/><path d="M1.3 3.5H8.8M1.3 5.5H4.4M1.3 7.45H4.4" stroke-width=".9"/><circle cx="7.3" cy="6.4" r="1.9" stroke-width="1.15" fill="#fff"/><path d="M8.7 7.8L10.4 9.5" stroke-width="1.35" stroke-linecap="round"/></g></g>
<g transform="translate(656.3 366)"><g fill="none" stroke="#1b87d8" stroke-linejoin="round"><path d="M10.15 4V1.6Q10.15 .7 9.25 .7H1.6Q.7 .7 .7 1.6V8.4Q.7 9.25 1.6 9.25H4.4" stroke-width="1.35"/><path d="M1 .85H9.9" stroke-width="1.6"/><path d="M1.3 3.5H8.8M1.3 5.5H4.4M1.3 7.45H4.4" stroke-width=".9"/><circle cx="7.3" cy="6.4" r="1.9" stroke-width="1.15" fill="#fff"/><path d="M8.7 7.8L10.4 9.5" stroke-width="1.35" stroke-linecap="round"/></g></g>
<g transform="translate(718.3 366)"><g fill="none" stroke="#1b87d8" stroke-linejoin="round"><path d="M10.15 4V1.6Q10.15 .7 9.25 .7H1.6Q.7 .7 .7 1.6V8.4Q.7 9.25 1.6 9.25H4.4" stroke-width="1.35"/><path d="M1 .85H9.9" stroke-width="1.6"/><path d="M1.3 3.5H8.8M1.3 5.5H4.4M1.3 7.45H4.4" stroke-width=".9"/><circle cx="7.3" cy="6.4" r="1.9" stroke-width="1.15" fill="#fff"/><path d="M8.7 7.8L10.4 9.5" stroke-width="1.35" stroke-linecap="round"/></g></g>
<text x="762.53" y="374.91" font-size="8.36" fill="#3e3e3e">500,00</text>
<text x="833.48" y="374.91" font-size="8.36" fill="#7c7c7c">0,00</text>
<text x="889.43" y="374.91" font-size="8.36" fill="#3e3e3e">500,00</text>
<g transform="translate(921 363.76) scale(0.79)"><path d="M7.6 17.6H.8V.8H9.8L15 6V8" fill="none" stroke="#1b87d8" stroke-width="1.6" stroke-linejoin="round"/><path d="M9.6 1V6.2H14.8" fill="none" stroke="#7fbdec" stroke-width="1.1"/><path d="M10.2 4.2L5.6 12.4" fill="none" stroke="#78b8eb" stroke-width="1.6" stroke-dasharray="2.2 1.4"/><circle cx="14.1" cy="14.3" r="5.9" fill="#0f86dc" stroke="#fff" stroke-width=".9"/><path d="M17 17.2L12.3 12.5M11.6 16V11.8H15.8" fill="none" stroke="#fff" stroke-width="1.9"/></g>
<g transform="translate(937.4 363.76) scale(0.785)"><circle cx="10" cy="10" r="8.9" fill="#fff" stroke="#5da711" stroke-width="1.7"/><path d="M6 10H14M10 6V14" stroke="#5da711" stroke-width="1.7"/></g>
<g transform="translate(954.9 363.76) scale(0.785)"><circle cx="10" cy="10" r="8.9" fill="#fff" stroke="#d9494f" stroke-width="1.7"/><path d="M6 10H14" stroke="#d9494f" stroke-width="1.7"/></g>
<text x="24.8" y="393.05" font-size="8.48" fill="#6a6a6a" textLength="116.93">5290 - Motkonto for gruppe 52</text>
<g transform="translate(328 385)"><g fill="none" stroke="#dadada" stroke-linejoin="round"><path d="M10.15 4V1.6Q10.15 .7 9.25 .7H1.6Q.7 .7 .7 1.6V8.4Q.7 9.25 1.6 9.25H4.4" stroke-width="1.35"/><path d="M1 .85H9.9" stroke-width="1.6"/><path d="M1.3 3.5H8.8M1.3 5.5H4.4M1.3 7.45H4.4" stroke-width=".9"/><circle cx="7.3" cy="6.4" r="1.9" stroke-width="1.15" fill="#fafafa"/><path d="M8.7 7.8L10.4 9.5" stroke-width="1.35" stroke-linecap="round"/></g></g>
<g transform="translate(389.7 385)"><g fill="none" stroke="#1b87d8" stroke-linejoin="round"><path d="M10.15 4V1.6Q10.15 .7 9.25 .7H1.6Q.7 .7 .7 1.6V8.4Q.7 9.25 1.6 9.25H4.4" stroke-width="1.35"/><path d="M1 .85H9.9" stroke-width="1.6"/><path d="M1.3 3.5H8.8M1.3 5.5H4.4M1.3 7.45H4.4" stroke-width=".9"/><circle cx="7.3" cy="6.4" r="1.9" stroke-width="1.15" fill="#fff"/><path d="M8.7 7.8L10.4 9.5" stroke-width="1.35" stroke-linecap="round"/></g></g>
<text x="409.7" y="393.05" font-size="8.48" fill="#3e3e3e" textLength="70.5">Bokføring lønn Vis</text>
<g transform="translate(533.3 385)"><g fill="none" stroke="#1b87d8" stroke-linejoin="round"><path d="M10.15 4V1.6Q10.15 .7 9.25 .7H1.6Q.7 .7 .7 1.6V8.4Q.7 9.25 1.6 9.25H4.4" stroke-width="1.35"/><path d="M1 .85H9.9" stroke-width="1.6"/><path d="M1.3 3.5H8.8M1.3 5.5H4.4M1.3 7.45H4.4" stroke-width=".9"/><circle cx="7.3" cy="6.4" r="1.9" stroke-width="1.15" fill="#fff"/><path d="M8.7 7.8L10.4 9.5" stroke-width="1.35" stroke-linecap="round"/></g></g>
<g transform="translate(595.05 385)"><g fill="none" stroke="#1b87d8" stroke-linejoin="round"><path d="M10.15 4V1.6Q10.15 .7 9.25 .7H1.6Q.7 .7 .7 1.6V8.4Q.7 9.25 1.6 9.25H4.4" stroke-width="1.35"/><path d="M1 .85H9.9" stroke-width="1.6"/><path d="M1.3 3.5H8.8M1.3 5.5H4.4M1.3 7.45H4.4" stroke-width=".9"/><circle cx="7.3" cy="6.4" r="1.9" stroke-width="1.15" fill="#fff"/><path d="M8.7 7.8L10.4 9.5" stroke-width="1.35" stroke-linecap="round"/></g></g>
<g transform="translate(656.3 385)"><g fill="none" stroke="#1b87d8" stroke-linejoin="round"><path d="M10.15 4V1.6Q10.15 .7 9.25 .7H1.6Q.7 .7 .7 1.6V8.4Q.7 9.25 1.6 9.25H4.4" stroke-width="1.35"/><path d="M1 .85H9.9" stroke-width="1.6"/><path d="M1.3 3.5H8.8M1.3 5.5H4.4M1.3 7.45H4.4" stroke-width=".9"/><circle cx="7.3" cy="6.4" r="1.9" stroke-width="1.15" fill="#fff"/><path d="M8.7 7.8L10.4 9.5" stroke-width="1.35" stroke-linecap="round"/></g></g>
<g transform="translate(718.3 385)"><g fill="none" stroke="#1b87d8" stroke-linejoin="round"><path d="M10.15 4V1.6Q10.15 .7 9.25 .7H1.6Q.7 .7 .7 1.6V8.4Q.7 9.25 1.6 9.25H4.4" stroke-width="1.35"/><path d="M1 .85H9.9" stroke-width="1.6"/><path d="M1.3 3.5H8.8M1.3 5.5H4.4M1.3 7.45H4.4" stroke-width=".9"/><circle cx="7.3" cy="6.4" r="1.9" stroke-width="1.15" fill="#fff"/><path d="M8.7 7.8L10.4 9.5" stroke-width="1.35" stroke-linecap="round"/></g></g>
<text x="771.83" y="393.05" font-size="8.36" fill="#7c7c7c">0,00</text>
<text x="812.56" y="393.05" font-size="8.36" fill="#3e3e3e">18 359,00</text>
<text x="875.02" y="393.05" font-size="8.36" fill="#3e3e3e">-18 359,00</text>
<g transform="translate(921 381.9) scale(0.79)"><path d="M7.6 17.6H.8V.8H9.8L15 6V8" fill="none" stroke="#1b87d8" stroke-width="1.6" stroke-linejoin="round"/><path d="M9.6 1V6.2H14.8" fill="none" stroke="#7fbdec" stroke-width="1.1"/><path d="M10.2 4.2L5.6 12.4" fill="none" stroke="#78b8eb" stroke-width="1.6" stroke-dasharray="2.2 1.4"/><circle cx="14.1" cy="14.3" r="5.9" fill="#0f86dc" stroke="#fff" stroke-width=".9"/><path d="M17 17.2L12.3 12.5M11.6 16V11.8H15.8" fill="none" stroke="#fff" stroke-width="1.9"/></g>
<g transform="translate(937.4 381.9) scale(0.785)"><circle cx="10" cy="10" r="8.9" fill="#fff" stroke="#5da711" stroke-width="1.7"/><path d="M6 10H14M10 6V14" stroke="#5da711" stroke-width="1.7"/></g>
<g transform="translate(954.9 381.9) scale(0.785)"><circle cx="10" cy="10" r="8.9" fill="#fff" stroke="#d9494f" stroke-width="1.7"/><path d="M6 10H14" stroke="#d9494f" stroke-width="1.7"/></g>
<text x="24.8" y="411.18" font-size="8.48" fill="#6a6a6a" textLength="95.77">5400 - Arbeidsgiveravgift</text>
<g transform="translate(328 403)"><g fill="none" stroke="#dadada" stroke-linejoin="round"><path d="M10.15 4V1.6Q10.15 .7 9.25 .7H1.6Q.7 .7 .7 1.6V8.4Q.7 9.25 1.6 9.25H4.4" stroke-width="1.35"/><path d="M1 .85H9.9" stroke-width="1.6"/><path d="M1.3 3.5H8.8M1.3 5.5H4.4M1.3 7.45H4.4" stroke-width=".9"/><circle cx="7.3" cy="6.4" r="1.9" stroke-width="1.15" fill="#fafafa"/><path d="M8.7 7.8L10.4 9.5" stroke-width="1.35" stroke-linecap="round"/></g></g>
<g transform="translate(389.7 403)"><g fill="none" stroke="#1b87d8" stroke-linejoin="round"><path d="M10.15 4V1.6Q10.15 .7 9.25 .7H1.6Q.7 .7 .7 1.6V8.4Q.7 9.25 1.6 9.25H4.4" stroke-width="1.35"/><path d="M1 .85H9.9" stroke-width="1.6"/><path d="M1.3 3.5H8.8M1.3 5.5H4.4M1.3 7.45H4.4" stroke-width=".9"/><circle cx="7.3" cy="6.4" r="1.9" stroke-width="1.15" fill="#fff"/><path d="M8.7 7.8L10.4 9.5" stroke-width="1.35" stroke-linecap="round"/></g></g>
<text x="409.7" y="411.18" font-size="8.48" fill="#3e3e3e" textLength="70.5">Bokføring lønn Vis</text>
<g transform="translate(533.3 403)"><g fill="none" stroke="#1b87d8" stroke-linejoin="round"><path d="M10.15 4V1.6Q10.15 .7 9.25 .7H1.6Q.7 .7 .7 1.6V8.4Q.7 9.25 1.6 9.25H4.4" stroke-width="1.35"/><path d="M1 .85H9.9" stroke-width="1.6"/><path d="M1.3 3.5H8.8M1.3 5.5H4.4M1.3 7.45H4.4" stroke-width=".9"/><circle cx="7.3" cy="6.4" r="1.9" stroke-width="1.15" fill="#fff"/><path d="M8.7 7.8L10.4 9.5" stroke-width="1.35" stroke-linecap="round"/></g></g>
<g transform="translate(595.05 403)"><g fill="none" stroke="#1b87d8" stroke-linejoin="round"><path d="M10.15 4V1.6Q10.15 .7 9.25 .7H1.6Q.7 .7 .7 1.6V8.4Q.7 9.25 1.6 9.25H4.4" stroke-width="1.35"/><path d="M1 .85H9.9" stroke-width="1.6"/><path d="M1.3 3.5H8.8M1.3 5.5H4.4M1.3 7.45H4.4" stroke-width=".9"/><circle cx="7.3" cy="6.4" r="1.9" stroke-width="1.15" fill="#fff"/><path d="M8.7 7.8L10.4 9.5" stroke-width="1.35" stroke-linecap="round"/></g></g>
<g transform="translate(656.3 403)"><g fill="none" stroke="#1b87d8" stroke-linejoin="round"><path d="M10.15 4V1.6Q10.15 .7 9.25 .7H1.6Q.7 .7 .7 1.6V8.4Q.7 9.25 1.6 9.25H4.4" stroke-width="1.35"/><path d="M1 .85H9.9" stroke-width="1.6"/><path d="M1.3 3.5H8.8M1.3 5.5H4.4M1.3 7.45H4.4" stroke-width=".9"/><circle cx="7.3" cy="6.4" r="1.9" stroke-width="1.15" fill="#fff"/><path d="M8.7 7.8L10.4 9.5" stroke-width="1.35" stroke-linecap="round"/></g></g>
<g transform="translate(718.3 403)"><g fill="none" stroke="#1b87d8" stroke-linejoin="round"><path d="M10.15 4V1.6Q10.15 .7 9.25 .7H1.6Q.7 .7 .7 1.6V8.4Q.7 9.25 1.6 9.25H4.4" stroke-width="1.35"/><path d="M1 .85H9.9" stroke-width="1.6"/><path d="M1.3 3.5H8.8M1.3 5.5H4.4M1.3 7.45H4.4" stroke-width=".9"/><circle cx="7.3" cy="6.4" r="1.9" stroke-width="1.15" fill="#fff"/><path d="M8.7 7.8L10.4 9.5" stroke-width="1.35" stroke-linecap="round"/></g></g>
<text x="755.56" y="411.18" font-size="8.36" fill="#3e3e3e">9 638,62</text>
<text x="833.48" y="411.18" font-size="8.36" fill="#7c7c7c">0,00</text>
<text x="882.46" y="411.18" font-size="8.36" fill="#3e3e3e">9 638,62</text>
<g transform="translate(921 400.03) scale(0.79)"><path d="M7.6 17.6H.8V.8H9.8L15 6V8" fill="none" stroke="#1b87d8" stroke-width="1.6" stroke-linejoin="round"/><path d="M9.6 1V6.2H14.8" fill="none" stroke="#7fbdec" stroke-width="1.1"/><path d="M10.2 4.2L5.6 12.4" fill="none" stroke="#78b8eb" stroke-width="1.6" stroke-dasharray="2.2 1.4"/><circle cx="14.1" cy="14.3" r="5.9" fill="#0f86dc" stroke="#fff" stroke-width=".9"/><path d="M17 17.2L12.3 12.5M11.6 16V11.8H15.8" fill="none" stroke="#fff" stroke-width="1.9"/></g>
<g transform="translate(937.4 400.03) scale(0.785)"><circle cx="10" cy="10" r="8.9" fill="#fff" stroke="#5da711" stroke-width="1.7"/><path d="M6 10H14M10 6V14" stroke="#5da711" stroke-width="1.7"/></g>
<g transform="translate(954.9 400.03) scale(0.785)"><circle cx="10" cy="10" r="8.9" fill="#fff" stroke="#d9494f" stroke-width="1.7"/><path d="M6 10H14" stroke="#d9494f" stroke-width="1.7"/></g>
<text x="24.8" y="429.32" font-size="8.48" fill="#6a6a6a" textLength="185.32">5405 - Arbeidsgiveravgift av påløpte feriepenger</text>
<g transform="translate(328 421)"><g fill="none" stroke="#dadada" stroke-linejoin="round"><path d="M10.15 4V1.6Q10.15 .7 9.25 .7H1.6Q.7 .7 .7 1.6V8.4Q.7 9.25 1.6 9.25H4.4" stroke-width="1.35"/><path d="M1 .85H9.9" stroke-width="1.6"/><path d="M1.3 3.5H8.8M1.3 5.5H4.4M1.3 7.45H4.4" stroke-width=".9"/><circle cx="7.3" cy="6.4" r="1.9" stroke-width="1.15" fill="#fafafa"/><path d="M8.7 7.8L10.4 9.5" stroke-width="1.35" stroke-linecap="round"/></g></g>
<g transform="translate(389.7 421)"><g fill="none" stroke="#1b87d8" stroke-linejoin="round"><path d="M10.15 4V1.6Q10.15 .7 9.25 .7H1.6Q.7 .7 .7 1.6V8.4Q.7 9.25 1.6 9.25H4.4" stroke-width="1.35"/><path d="M1 .85H9.9" stroke-width="1.6"/><path d="M1.3 3.5H8.8M1.3 5.5H4.4M1.3 7.45H4.4" stroke-width=".9"/><circle cx="7.3" cy="6.4" r="1.9" stroke-width="1.15" fill="#fff"/><path d="M8.7 7.8L10.4 9.5" stroke-width="1.35" stroke-linecap="round"/></g></g>
<text x="409.7" y="429.32" font-size="8.48" fill="#3e3e3e" textLength="70.5">Bokføring lønn Vis</text>
<g transform="translate(533.3 421)"><g fill="none" stroke="#1b87d8" stroke-linejoin="round"><path d="M10.15 4V1.6Q10.15 .7 9.25 .7H1.6Q.7 .7 .7 1.6V8.4Q.7 9.25 1.6 9.25H4.4" stroke-width="1.35"/><path d="M1 .85H9.9" stroke-width="1.6"/><path d="M1.3 3.5H8.8M1.3 5.5H4.4M1.3 7.45H4.4" stroke-width=".9"/><circle cx="7.3" cy="6.4" r="1.9" stroke-width="1.15" fill="#fff"/><path d="M8.7 7.8L10.4 9.5" stroke-width="1.35" stroke-linecap="round"/></g></g>
<g transform="translate(595.05 421)"><g fill="none" stroke="#1b87d8" stroke-linejoin="round"><path d="M10.15 4V1.6Q10.15 .7 9.25 .7H1.6Q.7 .7 .7 1.6V8.4Q.7 9.25 1.6 9.25H4.4" stroke-width="1.35"/><path d="M1 .85H9.9" stroke-width="1.6"/><path d="M1.3 3.5H8.8M1.3 5.5H4.4M1.3 7.45H4.4" stroke-width=".9"/><circle cx="7.3" cy="6.4" r="1.9" stroke-width="1.15" fill="#fff"/><path d="M8.7 7.8L10.4 9.5" stroke-width="1.35" stroke-linecap="round"/></g></g>
<g transform="translate(656.3 421)"><g fill="none" stroke="#1b87d8" stroke-linejoin="round"><path d="M10.15 4V1.6Q10.15 .7 9.25 .7H1.6Q.7 .7 .7 1.6V8.4Q.7 9.25 1.6 9.25H4.4" stroke-width="1.35"/><path d="M1 .85H9.9" stroke-width="1.6"/><path d="M1.3 3.5H8.8M1.3 5.5H4.4M1.3 7.45H4.4" stroke-width=".9"/><circle cx="7.3" cy="6.4" r="1.9" stroke-width="1.15" fill="#fff"/><path d="M8.7 7.8L10.4 9.5" stroke-width="1.35" stroke-linecap="round"/></g></g>
<g transform="translate(718.3 421)"><g fill="none" stroke="#1b87d8" stroke-linejoin="round"><path d="M10.15 4V1.6Q10.15 .7 9.25 .7H1.6Q.7 .7 .7 1.6V8.4Q.7 9.25 1.6 9.25H4.4" stroke-width="1.35"/><path d="M1 .85H9.9" stroke-width="1.6"/><path d="M1.3 3.5H8.8M1.3 5.5H4.4M1.3 7.45H4.4" stroke-width=".9"/><circle cx="7.3" cy="6.4" r="1.9" stroke-width="1.15" fill="#fff"/><path d="M8.7 7.8L10.4 9.5" stroke-width="1.35" stroke-linecap="round"/></g></g>
<text x="762.53" y="429.32" font-size="8.36" fill="#3e3e3e">846,00</text>
<text x="833.48" y="429.32" font-size="8.36" fill="#7c7c7c">0,00</text>
<text x="889.43" y="429.32" font-size="8.36" fill="#3e3e3e">846,00</text>
<g transform="translate(921 418.17) scale(0.79)"><path d="M7.6 17.6H.8V.8H9.8L15 6V8" fill="none" stroke="#1b87d8" stroke-width="1.6" stroke-linejoin="round"/><path d="M9.6 1V6.2H14.8" fill="none" stroke="#7fbdec" stroke-width="1.1"/><path d="M10.2 4.2L5.6 12.4" fill="none" stroke="#78b8eb" stroke-width="1.6" stroke-dasharray="2.2 1.4"/><circle cx="14.1" cy="14.3" r="5.9" fill="#0f86dc" stroke="#fff" stroke-width=".9"/><path d="M17 17.2L12.3 12.5M11.6 16V11.8H15.8" fill="none" stroke="#fff" stroke-width="1.9"/></g>
<g transform="translate(937.4 418.17) scale(0.785)"><circle cx="10" cy="10" r="8.9" fill="#fff" stroke="#5da711" stroke-width="1.7"/><path d="M6 10H14M10 6V14" stroke="#5da711" stroke-width="1.7"/></g>
<g transform="translate(954.9 418.17) scale(0.785)"><circle cx="10" cy="10" r="8.9" fill="#fff" stroke="#d9494f" stroke-width="1.7"/><path d="M6 10H14" stroke="#d9494f" stroke-width="1.7"/></g>
<text x="24.8" y="447.45" font-size="8.48" fill="#6a6a6a" textLength="79.61">7395 - Øreavrunding</text>
<g transform="translate(328 439)"><g fill="none" stroke="#dadada" stroke-linejoin="round"><path d="M10.15 4V1.6Q10.15 .7 9.25 .7H1.6Q.7 .7 .7 1.6V8.4Q.7 9.25 1.6 9.25H4.4" stroke-width="1.35"/><path d="M1 .85H9.9" stroke-width="1.6"/><path d="M1.3 3.5H8.8M1.3 5.5H4.4M1.3 7.45H4.4" stroke-width=".9"/><circle cx="7.3" cy="6.4" r="1.9" stroke-width="1.15" fill="#fafafa"/><path d="M8.7 7.8L10.4 9.5" stroke-width="1.35" stroke-linecap="round"/></g></g>
<g transform="translate(389.7 439)"><g fill="none" stroke="#1b87d8" stroke-linejoin="round"><path d="M10.15 4V1.6Q10.15 .7 9.25 .7H1.6Q.7 .7 .7 1.6V8.4Q.7 9.25 1.6 9.25H4.4" stroke-width="1.35"/><path d="M1 .85H9.9" stroke-width="1.6"/><path d="M1.3 3.5H8.8M1.3 5.5H4.4M1.3 7.45H4.4" stroke-width=".9"/><circle cx="7.3" cy="6.4" r="1.9" stroke-width="1.15" fill="#fff"/><path d="M8.7 7.8L10.4 9.5" stroke-width="1.35" stroke-linecap="round"/></g></g>
<text x="409.7" y="447.45" font-size="8.48" fill="#3e3e3e" textLength="70.5">Bokføring lønn Vis</text>
<g transform="translate(533.3 439)"><g fill="none" stroke="#1b87d8" stroke-linejoin="round"><path d="M10.15 4V1.6Q10.15 .7 9.25 .7H1.6Q.7 .7 .7 1.6V8.4Q.7 9.25 1.6 9.25H4.4" stroke-width="1.35"/><path d="M1 .85H9.9" stroke-width="1.6"/><path d="M1.3 3.5H8.8M1.3 5.5H4.4M1.3 7.45H4.4" stroke-width=".9"/><circle cx="7.3" cy="6.4" r="1.9" stroke-width="1.15" fill="#fff"/><path d="M8.7 7.8L10.4 9.5" stroke-width="1.35" stroke-linecap="round"/></g></g>
<g transform="translate(595.05 439)"><g fill="none" stroke="#1b87d8" stroke-linejoin="round"><path d="M10.15 4V1.6Q10.15 .7 9.25 .7H1.6Q.7 .7 .7 1.6V8.4Q.7 9.25 1.6 9.25H4.4" stroke-width="1.35"/><path d="M1 .85H9.9" stroke-width="1.6"/><path d="M1.3 3.5H8.8M1.3 5.5H4.4M1.3 7.45H4.4" stroke-width=".9"/><circle cx="7.3" cy="6.4" r="1.9" stroke-width="1.15" fill="#fff"/><path d="M8.7 7.8L10.4 9.5" stroke-width="1.35" stroke-linecap="round"/></g></g>
<g transform="translate(656.3 439)"><g fill="none" stroke="#1b87d8" stroke-linejoin="round"><path d="M10.15 4V1.6Q10.15 .7 9.25 .7H1.6Q.7 .7 .7 1.6V8.4Q.7 9.25 1.6 9.25H4.4" stroke-width="1.35"/><path d="M1 .85H9.9" stroke-width="1.6"/><path d="M1.3 3.5H8.8M1.3 5.5H4.4M1.3 7.45H4.4" stroke-width=".9"/><circle cx="7.3" cy="6.4" r="1.9" stroke-width="1.15" fill="#fff"/><path d="M8.7 7.8L10.4 9.5" stroke-width="1.35" stroke-linecap="round"/></g></g>
<g transform="translate(718.3 439)"><g fill="none" stroke="#1b87d8" stroke-linejoin="round"><path d="M10.15 4V1.6Q10.15 .7 9.25 .7H1.6Q.7 .7 .7 1.6V8.4Q.7 9.25 1.6 9.25H4.4" stroke-width="1.35"/><path d="M1 .85H9.9" stroke-width="1.6"/><path d="M1.3 3.5H8.8M1.3 5.5H4.4M1.3 7.45H4.4" stroke-width=".9"/><circle cx="7.3" cy="6.4" r="1.9" stroke-width="1.15" fill="#fff"/><path d="M8.7 7.8L10.4 9.5" stroke-width="1.35" stroke-linecap="round"/></g></g>
<text x="771.83" y="447.45" font-size="8.36" fill="#3e3e3e">0,00</text>
<text x="833.48" y="447.45" font-size="8.36" fill="#3e3e3e">0,00</text>
<text x="898.73" y="447.45" font-size="8.36" fill="#3e3e3e">0,00</text>
<g transform="translate(921 436.3) scale(0.79)"><path d="M7.6 17.6H.8V.8H9.8L15 6V8" fill="none" stroke="#1b87d8" stroke-width="1.6" stroke-linejoin="round"/><path d="M9.6 1V6.2H14.8" fill="none" stroke="#7fbdec" stroke-width="1.1"/><path d="M10.2 4.2L5.6 12.4" fill="none" stroke="#78b8eb" stroke-width="1.6" stroke-dasharray="2.2 1.4"/><circle cx="14.1" cy="14.3" r="5.9" fill="#0f86dc" stroke="#fff" stroke-width=".9"/><path d="M17 17.2L12.3 12.5M11.6 16V11.8H15.8" fill="none" stroke="#fff" stroke-width="1.9"/></g>
<g transform="translate(937.4 436.3) scale(0.785)"><circle cx="10" cy="10" r="8.9" fill="#fff" stroke="#5da711" stroke-width="1.7"/><path d="M6 10H14M10 6V14" stroke="#5da711" stroke-width="1.7"/></g>
<g transform="translate(954.9 436.3) scale(0.785)"><circle cx="10" cy="10" r="8.9" fill="#fff" stroke="#d9494f" stroke-width="1.7"/><path d="M6 10H14" stroke="#d9494f" stroke-width="1.7"/></g>
<text x="658.9" y="538.75" font-size="8.48" fill="#4c4c4c" textLength="44.7">Sum debet:</text>
<text x="658.9" y="550" font-size="8.48" fill="#4c4c4c" textLength="44.22">Sum kredit:</text>
<text x="934.2" y="538.75" font-size="8.36" fill="#555" textLength="37.5">91 701,62</text>
<text x="934.2" y="550" font-size="8.36" fill="#555" textLength="37.5">91 701,62</text>
<text x="658.9" y="572.4" font-size="8.48" fill="#333" textLength="42.3" font-weight="bold">Differanse:</text>
<text x="955.2" y="572.4" font-size="8.48" fill="#333" font-weight="bold">0,00</text>
<text x="48.85" y="618.3" font-size="8.48" fill="#3e3e3e" textLength="44.6">Periodisere</text>
<text x="795.05" y="618.3" font-size="8.48" fill="#fff" textLength="25.9" font-weight="bold">Bokfør</text>
<text x="907.2" y="618.3" font-size="8.48" fill="#3e3e3e" textLength="25.4">Avbryt</text>
<text x="-145.6" y="989.9" font-size="10.32" fill="#fff" textLength="79.4" stroke="#fff" stroke-width=".3" transform="rotate(-90)">Koblede vedlegg</text>
<text x="975.12" y="51.4" font-size="7.84" fill="#fff" stroke="#fff" stroke-width=".25">9</text>
</svg></body></html>
